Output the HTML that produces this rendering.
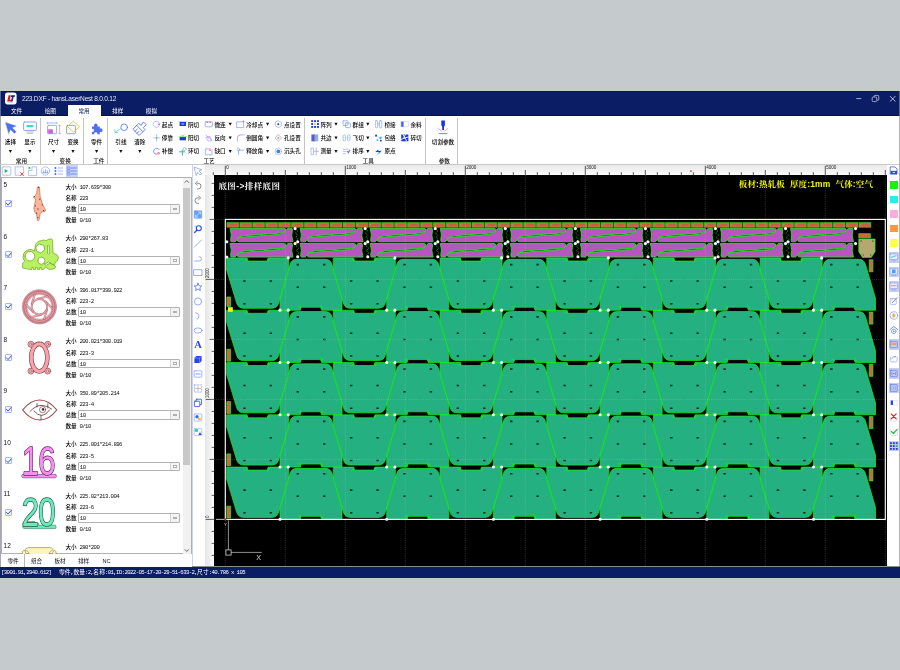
<!DOCTYPE html>
<html lang="zh-CN"><head><meta charset="utf-8"><title>223.DXF - hansLaserNest 8.0.0.12</title>
<style>
html,body{margin:0;padding:0}
body{width:900px;height:670px;overflow:hidden;position:relative;background:#c5cacc;font-family:'Liberation Sans','Noto Sans CJK SC',sans-serif;font-size:5.6px;color:#111;-webkit-font-smoothing:antialiased}
div{box-sizing:border-box}
svg{position:absolute;overflow:visible}
.t{position:absolute;white-space:nowrap}
</style></head><body><div id="root" style="position:absolute;left:0;top:0;width:900px;height:670px;will-change:transform">
<div style="position:absolute;left:0px;top:91px;width:900px;height:487.3px;background:#fff;"></div>
<div style="position:absolute;left:0px;top:91px;width:900px;height:25.3px;background:#0b1d64;"></div>
<div style="position:absolute;left:0px;top:91px;width:900px;height:1px;background:#081660;"></div>
<div style="position:absolute;left:0px;top:115px;width:900px;height:1px;background:#050f58;"></div>
<div style="position:absolute;left:0px;top:116px;width:0.8px;height:451px;background:#a4a8b4;"></div>
<div style="position:absolute;left:0px;top:91px;width:0.8px;height:25px;background:#5a6592;"></div>
<div style="position:absolute;left:899.2px;top:91px;width:0.8px;height:25px;background:#59648f;"></div>
<svg style="left:0;top:0" width="900" height="670" viewBox="0 0 900 670">
<rect x="5" y="92.6" width="11.6" height="11.8" rx="2.6" fill="#fff"/>
<path d="M8.6 95.2h2.3l-1.1 4.6h2.4l-.4 1.6h-4.6z" fill="#e8141c"/>
<path d="M11.2 95.2h3.9l-.5 1.7h-1l-1 4.5h-1.7l1.1-4.5h-1.2z" fill="#1a2a8c"/>
<path d="M7.6 102.3h5.6" stroke="#7aa0e0" stroke-width=".5"/>
<path d="M856.3 98.6h5" stroke="#cfd4e6" stroke-width=".8" fill="none"/>
<rect x="872.2" y="97" width="4.6" height="4.6" rx="1" fill="none" stroke="#b9c0da" stroke-width=".8"/>
<path d="M874 96.9v-.6q0-.9.9-.9h3q.9 0 .9.9v3q0 .9-.9.9h-.9" fill="none" stroke="#b9c0da" stroke-width=".8"/>
<path d="M890 96.1l5.4 5.4M895.4 96.1l-5.4 5.4" stroke="#dfe3f0" stroke-width=".8" fill="none"/>
</svg>
<div style="position:absolute;left:22px;top:93.98px;height:9.24px;line-height:9.24px;font-size:6.6px;color:#e6eaf8;white-space:nowrap;letter-spacing:-0.24px;">223.DXF - hansLaserNest 8.0.0.12</div>
<div style="position:absolute;left:67.8px;top:105.2px;width:33.2px;height:11.3px;background:#fff;"></div>
<div style="position:absolute;left:16.6px;transform:translateX(-50%);top:108.26px;height:7.84px;line-height:7.84px;font-size:5.6px;color:#fff;white-space:nowrap;">文件</div>
<div style="position:absolute;left:50.300000000000004px;transform:translateX(-50%);top:108.26px;height:7.84px;line-height:7.84px;font-size:5.6px;color:#fff;white-space:nowrap;">绘图</div>
<div style="position:absolute;left:84.0px;transform:translateX(-50%);top:108.26px;height:7.84px;line-height:7.84px;font-size:5.6px;color:#0b1d64;white-space:nowrap;">常用</div>
<div style="position:absolute;left:117.70000000000002px;transform:translateX(-50%);top:108.26px;height:7.84px;line-height:7.84px;font-size:5.6px;color:#fff;white-space:nowrap;">排样</div>
<div style="position:absolute;left:151.4px;transform:translateX(-50%);top:108.26px;height:7.84px;line-height:7.84px;font-size:5.6px;color:#fff;white-space:nowrap;">模拟</div>
<div style="position:absolute;left:0px;top:164px;width:900px;height:0.9px;background:#c9c9c9;"></div>
<div style="position:absolute;left:39.9px;top:117.5px;width:0.8px;height:46px;background:#c4c4c4;"></div>
<div style="position:absolute;left:83.3px;top:117.5px;width:0.8px;height:46px;background:#c4c4c4;"></div>
<div style="position:absolute;left:107.0px;top:117.5px;width:0.8px;height:46px;background:#c4c4c4;"></div>
<div style="position:absolute;left:304.20000000000005px;top:117.5px;width:0.8px;height:46px;background:#c4c4c4;"></div>
<div style="position:absolute;left:425.3px;top:117.5px;width:0.8px;height:46px;background:#c4c4c4;"></div>
<div style="position:absolute;left:456.8px;top:117.5px;width:0.8px;height:46px;background:#c4c4c4;"></div>
<div style="position:absolute;left:10.4px;transform:translateX(-50%);top:139.46px;height:7.84px;line-height:7.84px;font-size:5.6px;color:#000;white-space:nowrap;font-weight:500;">选择</div>
<div style="position:absolute;left:29.9px;transform:translateX(-50%);top:139.46px;height:7.84px;line-height:7.84px;font-size:5.6px;color:#000;white-space:nowrap;font-weight:500;">显示</div>
<div style="position:absolute;left:53.5px;transform:translateX(-50%);top:139.46px;height:7.84px;line-height:7.84px;font-size:5.6px;color:#000;white-space:nowrap;font-weight:500;">尺寸</div>
<div style="position:absolute;left:73px;transform:translateX(-50%);top:139.46px;height:7.84px;line-height:7.84px;font-size:5.6px;color:#000;white-space:nowrap;font-weight:500;">变换</div>
<div style="position:absolute;left:96.6px;transform:translateX(-50%);top:139.46px;height:7.84px;line-height:7.84px;font-size:5.6px;color:#000;white-space:nowrap;font-weight:500;">零件</div>
<div style="position:absolute;left:120.9px;transform:translateX(-50%);top:139.46px;height:7.84px;line-height:7.84px;font-size:5.6px;color:#000;white-space:nowrap;font-weight:500;">引线</div>
<div style="position:absolute;left:139.8px;transform:translateX(-50%);top:139.46px;height:7.84px;line-height:7.84px;font-size:5.6px;color:#000;white-space:nowrap;font-weight:500;">清除</div>
<div style="position:absolute;left:443px;transform:translateX(-50%);top:139.46px;height:7.84px;line-height:7.84px;font-size:5.6px;color:#000;white-space:nowrap;font-weight:500;">切割参数</div>
<div style="position:absolute;left:21.4px;transform:translateX(-50%);top:158.06px;height:7.84px;line-height:7.84px;font-size:5.6px;color:#111;white-space:nowrap;font-weight:500;">常用</div>
<div style="position:absolute;left:65.2px;transform:translateX(-50%);top:158.06px;height:7.84px;line-height:7.84px;font-size:5.6px;color:#111;white-space:nowrap;font-weight:500;">变换</div>
<div style="position:absolute;left:98.8px;transform:translateX(-50%);top:158.06px;height:7.84px;line-height:7.84px;font-size:5.6px;color:#111;white-space:nowrap;font-weight:500;">工件</div>
<div style="position:absolute;left:209px;transform:translateX(-50%);top:158.06px;height:7.84px;line-height:7.84px;font-size:5.6px;color:#111;white-space:nowrap;font-weight:500;">工艺</div>
<div style="position:absolute;left:368.2px;transform:translateX(-50%);top:158.06px;height:7.84px;line-height:7.84px;font-size:5.6px;color:#111;white-space:nowrap;font-weight:500;">工具</div>
<div style="position:absolute;left:444.3px;transform:translateX(-50%);top:158.06px;height:7.84px;line-height:7.84px;font-size:5.6px;color:#111;white-space:nowrap;font-weight:500;">参数</div>
<div style="position:absolute;left:161.8px;top:121.56px;height:7.84px;line-height:7.84px;font-size:5.6px;color:#000;white-space:nowrap;font-weight:500;">起点</div>
<div style="position:absolute;left:161.8px;top:134.76px;height:7.84px;line-height:7.84px;font-size:5.6px;color:#000;white-space:nowrap;font-weight:500;">停靠</div>
<div style="position:absolute;left:161.8px;top:148.26px;height:7.84px;line-height:7.84px;font-size:5.6px;color:#000;white-space:nowrap;font-weight:500;">补偿</div>
<div style="position:absolute;left:188.0px;top:121.56px;height:7.84px;line-height:7.84px;font-size:5.6px;color:#000;white-space:nowrap;font-weight:500;">阴切</div>
<div style="position:absolute;left:188.0px;top:134.76px;height:7.84px;line-height:7.84px;font-size:5.6px;color:#000;white-space:nowrap;font-weight:500;">阳切</div>
<div style="position:absolute;left:188.0px;top:148.26px;height:7.84px;line-height:7.84px;font-size:5.6px;color:#000;white-space:nowrap;font-weight:500;">环切</div>
<div style="position:absolute;left:214.4px;top:121.56px;height:7.84px;line-height:7.84px;font-size:5.6px;color:#000;white-space:nowrap;font-weight:500;">微连</div>
<div style="position:absolute;left:214.4px;top:134.76px;height:7.84px;line-height:7.84px;font-size:5.6px;color:#000;white-space:nowrap;font-weight:500;">反向</div>
<div style="position:absolute;left:214.4px;top:148.26px;height:7.84px;line-height:7.84px;font-size:5.6px;color:#000;white-space:nowrap;font-weight:500;">缺口</div>
<div style="position:absolute;left:246.2px;top:121.56px;height:7.84px;line-height:7.84px;font-size:5.6px;color:#000;white-space:nowrap;font-weight:500;">冷却点</div>
<div style="position:absolute;left:246.2px;top:134.76px;height:7.84px;line-height:7.84px;font-size:5.6px;color:#000;white-space:nowrap;font-weight:500;">倒圆角</div>
<div style="position:absolute;left:246.2px;top:148.26px;height:7.84px;line-height:7.84px;font-size:5.6px;color:#000;white-space:nowrap;font-weight:500;">释放角</div>
<div style="position:absolute;left:284.0px;top:121.56px;height:7.84px;line-height:7.84px;font-size:5.6px;color:#000;white-space:nowrap;font-weight:500;">点设置</div>
<div style="position:absolute;left:284.0px;top:134.76px;height:7.84px;line-height:7.84px;font-size:5.6px;color:#000;white-space:nowrap;font-weight:500;">孔设置</div>
<div style="position:absolute;left:284.0px;top:148.26px;height:7.84px;line-height:7.84px;font-size:5.6px;color:#000;white-space:nowrap;font-weight:500;">沉头孔</div>
<div style="position:absolute;left:320.4px;top:121.56px;height:7.84px;line-height:7.84px;font-size:5.6px;color:#000;white-space:nowrap;font-weight:500;">阵列</div>
<div style="position:absolute;left:320.4px;top:134.76px;height:7.84px;line-height:7.84px;font-size:5.6px;color:#000;white-space:nowrap;font-weight:500;">共边</div>
<div style="position:absolute;left:320.4px;top:148.26px;height:7.84px;line-height:7.84px;font-size:5.6px;color:#000;white-space:nowrap;font-weight:500;">测量</div>
<div style="position:absolute;left:352.6px;top:121.56px;height:7.84px;line-height:7.84px;font-size:5.6px;color:#000;white-space:nowrap;font-weight:500;">群组</div>
<div style="position:absolute;left:352.6px;top:134.76px;height:7.84px;line-height:7.84px;font-size:5.6px;color:#000;white-space:nowrap;font-weight:500;">飞切</div>
<div style="position:absolute;left:352.6px;top:148.26px;height:7.84px;line-height:7.84px;font-size:5.6px;color:#000;white-space:nowrap;font-weight:500;">排序</div>
<div style="position:absolute;left:384.4px;top:121.56px;height:7.84px;line-height:7.84px;font-size:5.6px;color:#000;white-space:nowrap;font-weight:500;">桥接</div>
<div style="position:absolute;left:384.4px;top:134.76px;height:7.84px;line-height:7.84px;font-size:5.6px;color:#000;white-space:nowrap;font-weight:500;">包络</div>
<div style="position:absolute;left:384.4px;top:148.26px;height:7.84px;line-height:7.84px;font-size:5.6px;color:#000;white-space:nowrap;font-weight:500;">原点</div>
<div style="position:absolute;left:410.5px;top:121.56px;height:7.84px;line-height:7.84px;font-size:5.6px;color:#000;white-space:nowrap;font-weight:500;">余料</div>
<div style="position:absolute;left:410.5px;top:134.76px;height:7.84px;line-height:7.84px;font-size:5.6px;color:#000;white-space:nowrap;font-weight:500;">碎切</div>
<svg style="left:0;top:0" width="900" height="670" viewBox="0 0 900 670" fill="none" stroke-linecap="round" stroke-linejoin="round">
<path d="M8.80 149.88h3.2l-1.60 3.04z" fill="#111"/>
<path d="M28.30 149.88h3.2l-1.60 3.04z" fill="#111"/>
<path d="M51.90 149.88h3.2l-1.60 3.04z" fill="#111"/>
<path d="M71.40 149.88h3.2l-1.60 3.04z" fill="#111"/>
<path d="M95.00 149.88h3.2l-1.60 3.04z" fill="#111"/>
<path d="M119.30 149.88h3.2l-1.60 3.04z" fill="#111"/>
<path d="M138.20 149.88h3.2l-1.60 3.04z" fill="#111"/>
<path d="M228.60 122.68h3.2l-1.60 3.04z" fill="#111"/>
<path d="M228.60 136.38h3.2l-1.60 3.04z" fill="#111"/>
<path d="M228.60 149.88h3.2l-1.60 3.04z" fill="#111"/>
<path d="M266.00 122.68h3.2l-1.60 3.04z" fill="#111"/>
<path d="M266.00 136.38h3.2l-1.60 3.04z" fill="#111"/>
<path d="M266.00 149.88h3.2l-1.60 3.04z" fill="#111"/>
<path d="M334.40 122.68h3.2l-1.60 3.04z" fill="#111"/>
<path d="M334.40 136.38h3.2l-1.60 3.04z" fill="#111"/>
<path d="M334.40 149.88h3.2l-1.60 3.04z" fill="#111"/>
<path d="M366.20 122.68h3.2l-1.60 3.04z" fill="#111"/>
<path d="M366.20 136.38h3.2l-1.60 3.04z" fill="#111"/>
<path d="M366.20 149.88h3.2l-1.60 3.04z" fill="#111"/>
<path d="M5.6 122.4l10.6 3.6-4 1.8 3.9 3.9-1.7 1.7-3.9-3.9-1.8 4z" fill="#4f6ff0" stroke="#4f6ff0" stroke-width=".3"/>
<rect x="23.6" y="122" width="12.8" height="8.4" rx="1" stroke="#7f98f6" stroke-width=".9"/>
<rect x="26.6" y="125" width="6.8" height="2.2" fill="#3fd6c4"/>
<path d="M26.5 132h7M27.5 133.4h5" stroke="#7f98f6" stroke-width=".6"/>
<path d="M47.4 123h9.4" stroke="#7f98f6" stroke-width=".7" stroke-dasharray="1.2 .8"/>
<path d="M47.3 122.2v1.6M56.9 122.2v1.6M59.6 125.4v8.2M58.8 125.4h1.6M58.8 133.6h1.6" stroke="#7f98f6" stroke-width=".6"/>
<rect x="47.6" y="125.4" width="9" height="8.3" rx=".8" stroke="#7f98f6" stroke-width=".8"/>
<rect x="48.4" y="129.6" width="4.2" height="3.6" fill="#f04fd8" stroke="#4f6ff0" stroke-width=".4"/>
<rect x="66.6" y="125.4" width="8.8" height="8.3" rx=".8" stroke="#7f98f6" stroke-width=".9"/>
<path d="M73.6 121.4l5.9 5.4-5.9 5.4-5.9-5.4z" stroke="#f7a13a" stroke-width=".7"/>
<path fill-rule="evenodd" d="M92 126.400h2.300a1.800 1.800 0 1 1 3 0h2.500v2.300a1.800 1.800 0 1 1 0 3v2.500h-2.600a1.500 1.500 0 1 0-2.800 0h-2.400v-2.500a1.500 1.500 0 1 0 0-2.800z" fill="#4f6ff0" stroke="none"/>
<circle cx="124.2" cy="127.3" r="3.3" stroke="#4f6ff0" stroke-width=".8"/>
<path d="M120.8 128.6l-5.6 3.6M114.8 129.8l.2 2.6 2.6.1" stroke="#3fd6c4" stroke-width=".7"/>
<g transform="rotate(45 140.4 128)" stroke="#4f6ff0" stroke-width=".8"><path d="M138.6 121.6h3.6v4.2h2.6v3h-8.8v-3h2.6z"/><path d="M136 128.8v5.4h8.8v-5.4M139 131v3.2M141.8 131v3.2"/></g>
<path d="M441.3 120.6h3.6v4.6l-.9 1.6v3.2h-1.8v-3.2l-.9-1.6z" fill="#1838e0" stroke="none"/>
<path d="M438.6 128.6l3 2.6M447.6 128.6l-3 2.6" stroke="#f04fd8" stroke-width=".6"/>
<path d="M438.8 133.6h8.6" stroke="#22b8f0" stroke-width="1.1" stroke-linecap="butt"/>
<circle cx="156.4" cy="124.2" r="3.1" stroke="#7f98f6" stroke-width=".6" stroke-dasharray="2.2 .7"/><circle cx="159" cy="124.4" r=".8" fill="#f04fd8"/>
<path d="M156.6 134.5v6.8M153.4 137.9h6.4" stroke="#7f98f6" stroke-width=".6"/><circle cx="156.6" cy="137.9" r=".8" fill="#2fd65a"/>
<path d="M159.4 149.8a3.1 3.1 0 1 0-2.4 4.6" stroke="#4f6ff0" stroke-width=".7"/><circle cx="158.6" cy="153.20000000000002" r="1.3" fill="#f58a6a"/>
<rect x="179.6" y="122.0" width="6.4" height="4" fill="#1838e0"/><path d="M179 121.60000000000001h7.6" stroke="#7f98f6" stroke-width=".5"/><rect x="181.4" y="123.0" width="2.8" height="2" fill="#6a86f5"/>
<rect x="179.6" y="137.1" width="6.4" height="3.2" fill="#1838e0"/><path d="M181.4 134.9l1.2 1.4 1.6-1.6" stroke="#f0432a" stroke-width=".5"/><path d="M179 136.5h7.6" stroke="#2fd65a" stroke-width=".5"/>
<path d="M182.4 150.20000000000002v5" stroke="#2fb8a0" stroke-width="1"/><path d="M179.4 151.8h5.4" stroke="#2fb8a0" stroke-width=".9"/><circle cx="184.6" cy="149.0" r="1.5" stroke="#7f98f6" stroke-width=".6"/>
<rect x="205.2" y="121.8" width="7.2" height="5" rx=".6" stroke="#7f98f6" stroke-width=".7"/><path d="M206.7 122.2h1.4M209.5 122.2h1.4" stroke="#f0432a" stroke-width="1.1" stroke-linecap="butt"/>
<path d="M206 135.1l5.8 5.2M207.8 140.70000000000002l-1.8-3.6 3.8-.6 1.8 3.8z" stroke="#7f98f6" stroke-width=".6"/><circle cx="208.6" cy="137.3" r="1.3" fill="#f7a0e8"/>
<path d="M208 148.8h-2.6v6h6.6v-5" stroke="#7f98f6" stroke-width=".7"/><rect x="208.6" y="148.4" width="2.4" height="2.6" fill="#f7a0e8"/>
<rect x="237" y="121.8" width="6.6" height="5.8" stroke="#7f98f6" stroke-width=".7"/><circle cx="243.6" cy="121.4" r=".8" fill="#f04fd8"/>
<path d="M237.4 141.1v-3.2q0-3 3-3h3.6" stroke="#7f98f6" stroke-width=".7"/><path d="M237.4 137.5q.2-2.4 2.8-2.6" stroke="#f5a58a" stroke-width=".6"/>
<path d="M238.6 154.8v-4.6h5.4" stroke="#7f98f6" stroke-width=".7"/><circle cx="238.4" cy="149.4" r="1.3" stroke="#7f98f6" stroke-width=".6"/>
<path d="M278.3 120.8l3 1.7v3.4l-3 1.7-3-1.7v-3.4z" stroke="#7f98f6" stroke-width=".6"/><circle cx="278.3" cy="124.2" r="1" fill="#1838e0"/>
<path d="M278.3 134.5l3.2 3.4-3.2 3.4-3.2-3.4z" stroke="#7f98f6" stroke-width=".6" stroke-dasharray="1 .5"/><circle cx="278.3" cy="137.9" r="1.1" fill="#f7946a"/>
<circle cx="278.3" cy="151.4" r="3.3" stroke="#7f98f6" stroke-width=".5"/><circle cx="278.3" cy="151.4" r="1.9" fill="#3f7ff5"/>
<rect x="311.2" y="120.2" width="1.9" height="1.9" fill="#1838e0"/>
<rect x="314.1" y="120.2" width="1.9" height="1.9" fill="#1838e0"/>
<rect x="317.0" y="120.2" width="1.9" height="1.9" fill="#1838e0"/>
<rect x="311.2" y="123.1" width="1.9" height="1.9" fill="#1838e0"/>
<rect x="314.1" y="123.1" width="1.9" height="1.9" fill="#f5d020"/>
<rect x="317.0" y="123.1" width="1.9" height="1.9" fill="#1838e0"/>
<rect x="311.2" y="126.0" width="1.9" height="1.9" fill="#1838e0"/>
<rect x="314.1" y="126.0" width="1.9" height="1.9" fill="#1838e0"/>
<rect x="317.0" y="126.0" width="1.9" height="1.9" fill="#1838e0"/>
<rect x="311.4" y="134.5" width="3.2" height="6.8" fill="#3f62ee"/><rect x="314.6" y="134.5" width="3.6" height="6.8" fill="#7fb2f5"/><path d="M314.6 134.5v6.8" stroke="#f0432a" stroke-width=".6"/>
<rect x="311.4" y="148.20000000000002" width="2.2" height="6.4" stroke="#7f98f6" stroke-width=".6"/><path d="M316.2 147.8v7.2M314 151.4h4.4" stroke="#7f98f6" stroke-width=".6"/>
<rect x="343" y="120.8" width="5" height="4.6" rx=".6" stroke="#7f98f6" stroke-width=".7"/><rect x="345.4" y="123.0" width="5" height="4.6" rx=".6" stroke="#7f98f6" stroke-width=".7"/>
<rect x="343.2" y="134.9" width="2.4" height="6" rx="1" stroke="#7f98f6" stroke-width=".6" stroke-dasharray="1.2 .6"/><rect x="347.6" y="134.9" width="2.4" height="6" rx="1" stroke="#7f98f6" stroke-width=".6" stroke-dasharray="1.2 .6"/><path d="M343 137.9h7.4" stroke="#9fd8e8" stroke-width=".5"/>
<path d="M343.2 149.20000000000002h5M343.2 151.4h3M343.2 153.6h2" stroke="#7f98f6" stroke-width=".6"/><path d="M347 150.8l3 .6-2 2.4z" fill="#4f6ff0" stroke="none"/><circle cx="349.6" cy="150.4" r=".8" fill="#f04fd8"/>
<rect x="375.4" y="120.60000000000001" width="2.2" height="7.2" rx=".6" stroke="#7f98f6" stroke-width=".6"/><rect x="379.6" y="120.60000000000001" width="2.2" height="7.2" rx=".6" stroke="#7f98f6" stroke-width=".6"/><path d="M377.6 123.4h2M377.6 125.0h2" stroke="#7f98f6" stroke-width=".5"/>
<path d="M375.4 134.9l6.4 6" stroke="#f7a0e8" stroke-width=".6" stroke-dasharray=".8 .6"/><rect x="375.2" y="134.70000000000002" width="1.8" height="1.8" fill="#1838e0"/><rect x="379.4" y="136.70000000000002" width="2.2" height="2.2" fill="#22c0f0"/><rect x="376.6" y="139.3" width="1.6" height="1.6" fill="#22c0f0"/><rect x="380" y="139.9" width="1.6" height="1.6" fill="#1838e0"/>
<path d="M375.2 152.0l3.2-2.6v1.6l3.4-.2-3 2.8v-1.6z" fill="#1838e0" stroke="none"/><path d="M377 154.6l3.4-2.4" stroke="#22c0f0" stroke-width=".7"/>
<rect x="401.2" y="121.60000000000001" width="7.2" height="5.2" stroke="#c9d3fa" stroke-width=".7"/><rect x="401.2" y="121.60000000000001" width="2.4" height="5.2" fill="#3f62ee"/>
<rect x="401.2" y="134.5" width="7.2" height="6.8" fill="#1838e0"/><path d="M403 134.5l3.8 6.8M408.4 136.9l-7.2 2.4M405.4 134.5l-1.4 3" stroke="#fff" stroke-width=".9"/>
</svg>
<div style="position:absolute;left:66.4px;top:165.4px;width:11.6px;height:11.4px;background:#c9d5f6;"></div>
<svg style="left:0;top:0" width="900" height="670" viewBox="0 0 900 670" fill="none" stroke-linecap="round" stroke-linejoin="round">
<rect x="2.2" y="166.8" width="8.6" height="8.4" rx=".8" stroke="#92a7f7" stroke-width=".7"/><path d="M4.6 169l3.6 2-3.6 2z" fill="#1fc24a"/>
<path d="M20.4 175.2h-5.2v-8.4h8.4v4.6" stroke="#92a7f7" stroke-width=".7"/><path d="M20.6 172.6l3 3M23.6 172.6l-3 3" stroke="#f02a1c" stroke-width=".9"/>
<path d="M28.6 175.2v-4.8h3.4v-3.6h4.6v8.4z" stroke="#92a7f7" stroke-width=".7"/><path d="M28.6 166.6l2.6 1.3-2.6 1.3z" fill="#1fc24a"/>
<circle cx="45.4" cy="171" r="4.2" stroke="#92a7f7" stroke-width=".7"/><path d="M43.4 172.4v-1.4M45.4 172.4v-2.6M47.4 172.4v-1.4M43 172.8h4.8" stroke="#4f6ff0" stroke-width=".6"/>
<rect x="54.6" y="167.2" width="1.6" height="1.6" fill="#2a4cf0"/><path d="M58 168h4.6" stroke="#92a7f7" stroke-width=".8"/>
<rect x="67.6" y="166.9" width="2.4" height="2.2" stroke="#4f6ff0" stroke-width=".5"/><path d="M71.4 168h5" stroke="#4f6ff0" stroke-width=".7"/>
<rect x="54.6" y="170.2" width="1.6" height="1.6" fill="#2a4cf0"/><path d="M58 171h4.6" stroke="#92a7f7" stroke-width=".8"/>
<rect x="67.6" y="169.9" width="2.4" height="2.2" stroke="#4f6ff0" stroke-width=".5"/><path d="M71.4 171h5" stroke="#4f6ff0" stroke-width=".7"/>
<rect x="54.6" y="173.2" width="1.6" height="1.6" fill="#2a4cf0"/><path d="M58 174h4.6" stroke="#92a7f7" stroke-width=".8"/>
<rect x="67.6" y="172.9" width="2.4" height="2.2" stroke="#4f6ff0" stroke-width=".5"/><path d="M71.4 174h5" stroke="#4f6ff0" stroke-width=".7"/>
</svg>
<div style="position:absolute;left:1px;top:177px;width:190.8px;height:377.4px;background:#fff;border:0.8px solid #b0b0b0;"></div>
<div style="position:absolute;left:182.6px;top:177.8px;width:8.4px;height:375.8px;background:#f1f1f1;"></div>
<div style="position:absolute;left:183.2px;top:187.6px;width:7.2px;height:277.6px;background:#c8c8c8;"></div>
<svg style="left:0;top:0" width="900" height="670" viewBox="0 0 900 670" fill="none"><path d="M184.8 182.6l2-2 2 2M184.8 549.4l2 2 2-2" stroke="#444" stroke-width=".8"/></svg>
<div style="position:absolute;left:1.8px;top:177.8px;width:180.8px;height:375.8px;overflow:hidden">
<div style="position:absolute;left:-1.8px;top:-177.8px;width:900px;height:670px">
<div style="position:absolute;left:3.6px;top:180.45px;height:9.1px;line-height:9.1px;font-size:6.5px;color:#111;white-space:nowrap;">5</div>
<div style="position:absolute;left:65.4px;top:183.86px;height:7.84px;line-height:7.84px;font-size:5.6px;color:#000;white-space:nowrap;font-weight:500;">大小</div>
<div style="position:absolute;left:79.4px;top:183.91px;height:7.98px;line-height:7.98px;font-size:5.7px;color:#111;white-space:nowrap;font-family:'Liberation Mono','Noto Sans CJK SC',monospace;letter-spacing:-0.58px;">107.639*300</div>
<div style="position:absolute;left:65.4px;top:195.26px;height:7.84px;line-height:7.84px;font-size:5.6px;color:#000;white-space:nowrap;font-weight:500;">名称</div>
<div style="position:absolute;left:79.4px;top:195.31px;height:7.98px;line-height:7.98px;font-size:5.7px;color:#111;white-space:nowrap;font-family:'Liberation Mono','Noto Sans CJK SC',monospace;letter-spacing:-0.58px;">223</div>
<div style="position:absolute;left:65.4px;top:206.36px;height:7.84px;line-height:7.84px;font-size:5.6px;color:#000;white-space:nowrap;font-weight:500;">总数</div>
<div style="position:absolute;left:78.4px;top:204.4px;width:101.8px;height:9.4px;background:#fff;border:0.7px solid #b2b2b2;border-radius:1px;"></div>
<div style="position:absolute;left:170.4px;top:205.2px;width:9px;height:7.8px;background:#f3f3f3;border-left:0.6px solid #d4d4d4;"></div>
<div style="position:absolute;left:173.4px;top:207.6px;width:3.4px;height:2.8px;background:#fff;border:0.6px solid #b0b0b0;"></div>
<div style="position:absolute;left:79.8px;top:206.31px;height:7.98px;line-height:7.98px;font-size:5.7px;color:#111;white-space:nowrap;font-family:'Liberation Mono','Noto Sans CJK SC',monospace;letter-spacing:-0.58px;">10</div>
<div style="position:absolute;left:65.4px;top:217.36px;height:7.84px;line-height:7.84px;font-size:5.6px;color:#000;white-space:nowrap;font-weight:500;">数量</div>
<div style="position:absolute;left:79.4px;top:217.41px;height:7.98px;line-height:7.98px;font-size:5.7px;color:#111;white-space:nowrap;font-family:'Liberation Mono','Noto Sans CJK SC',monospace;letter-spacing:-0.58px;">0/10</div>
<div style="position:absolute;left:5px;top:199.6px;width:7.4px;height:7.4px;background:#f4f7ff;border:0.8px solid #a6b6f7;border-radius:1px;"></div>
<div style="position:absolute;left:3.6px;top:231.95px;height:9.1px;line-height:9.1px;font-size:6.5px;color:#111;white-space:nowrap;">6</div>
<div style="position:absolute;left:65.4px;top:235.36px;height:7.84px;line-height:7.84px;font-size:5.6px;color:#000;white-space:nowrap;font-weight:500;">大小</div>
<div style="position:absolute;left:79.4px;top:235.41px;height:7.98px;line-height:7.98px;font-size:5.7px;color:#111;white-space:nowrap;font-family:'Liberation Mono','Noto Sans CJK SC',monospace;letter-spacing:-0.58px;">290*267.83</div>
<div style="position:absolute;left:65.4px;top:246.76px;height:7.84px;line-height:7.84px;font-size:5.6px;color:#000;white-space:nowrap;font-weight:500;">名称</div>
<div style="position:absolute;left:79.4px;top:246.81px;height:7.98px;line-height:7.98px;font-size:5.7px;color:#111;white-space:nowrap;font-family:'Liberation Mono','Noto Sans CJK SC',monospace;letter-spacing:-0.58px;">223-1</div>
<div style="position:absolute;left:65.4px;top:257.86px;height:7.84px;line-height:7.84px;font-size:5.6px;color:#000;white-space:nowrap;font-weight:500;">总数</div>
<div style="position:absolute;left:78.4px;top:255.9px;width:101.8px;height:9.4px;background:#fff;border:0.7px solid #b2b2b2;border-radius:1px;"></div>
<div style="position:absolute;left:170.4px;top:256.7px;width:9px;height:7.8px;background:#f3f3f3;border-left:0.6px solid #d4d4d4;"></div>
<div style="position:absolute;left:173.4px;top:259.1px;width:3.4px;height:2.8px;background:#fff;border:0.6px solid #b0b0b0;"></div>
<div style="position:absolute;left:79.8px;top:257.81px;height:7.98px;line-height:7.98px;font-size:5.7px;color:#111;white-space:nowrap;font-family:'Liberation Mono','Noto Sans CJK SC',monospace;letter-spacing:-0.58px;">10</div>
<div style="position:absolute;left:65.4px;top:268.86px;height:7.84px;line-height:7.84px;font-size:5.6px;color:#000;white-space:nowrap;font-weight:500;">数量</div>
<div style="position:absolute;left:79.4px;top:268.91px;height:7.98px;line-height:7.98px;font-size:5.7px;color:#111;white-space:nowrap;font-family:'Liberation Mono','Noto Sans CJK SC',monospace;letter-spacing:-0.58px;">0/10</div>
<div style="position:absolute;left:5px;top:251.1px;width:7.4px;height:7.4px;background:#f4f7ff;border:0.8px solid #a6b6f7;border-radius:1px;"></div>
<div style="position:absolute;left:3.6px;top:283.45px;height:9.1px;line-height:9.1px;font-size:6.5px;color:#111;white-space:nowrap;">7</div>
<div style="position:absolute;left:65.4px;top:286.86px;height:7.84px;line-height:7.84px;font-size:5.6px;color:#000;white-space:nowrap;font-weight:500;">大小</div>
<div style="position:absolute;left:79.4px;top:286.91px;height:7.98px;line-height:7.98px;font-size:5.7px;color:#111;white-space:nowrap;font-family:'Liberation Mono','Noto Sans CJK SC',monospace;letter-spacing:-0.58px;">396.017*399.922</div>
<div style="position:absolute;left:65.4px;top:298.26px;height:7.84px;line-height:7.84px;font-size:5.6px;color:#000;white-space:nowrap;font-weight:500;">名称</div>
<div style="position:absolute;left:79.4px;top:298.31px;height:7.98px;line-height:7.98px;font-size:5.7px;color:#111;white-space:nowrap;font-family:'Liberation Mono','Noto Sans CJK SC',monospace;letter-spacing:-0.58px;">223-2</div>
<div style="position:absolute;left:65.4px;top:309.36px;height:7.84px;line-height:7.84px;font-size:5.6px;color:#000;white-space:nowrap;font-weight:500;">总数</div>
<div style="position:absolute;left:78.4px;top:307.4px;width:101.8px;height:9.4px;background:#fff;border:0.7px solid #b2b2b2;border-radius:1px;"></div>
<div style="position:absolute;left:170.4px;top:308.2px;width:9px;height:7.8px;background:#f3f3f3;border-left:0.6px solid #d4d4d4;"></div>
<div style="position:absolute;left:173.4px;top:310.6px;width:3.4px;height:2.8px;background:#fff;border:0.6px solid #b0b0b0;"></div>
<div style="position:absolute;left:79.8px;top:309.31px;height:7.98px;line-height:7.98px;font-size:5.7px;color:#111;white-space:nowrap;font-family:'Liberation Mono','Noto Sans CJK SC',monospace;letter-spacing:-0.58px;">10</div>
<div style="position:absolute;left:65.4px;top:320.36px;height:7.84px;line-height:7.84px;font-size:5.6px;color:#000;white-space:nowrap;font-weight:500;">数量</div>
<div style="position:absolute;left:79.4px;top:320.41px;height:7.98px;line-height:7.98px;font-size:5.7px;color:#111;white-space:nowrap;font-family:'Liberation Mono','Noto Sans CJK SC',monospace;letter-spacing:-0.58px;">0/10</div>
<div style="position:absolute;left:5px;top:302.6px;width:7.4px;height:7.4px;background:#f4f7ff;border:0.8px solid #a6b6f7;border-radius:1px;"></div>
<div style="position:absolute;left:3.6px;top:334.95px;height:9.1px;line-height:9.1px;font-size:6.5px;color:#111;white-space:nowrap;">8</div>
<div style="position:absolute;left:65.4px;top:338.36px;height:7.84px;line-height:7.84px;font-size:5.6px;color:#000;white-space:nowrap;font-weight:500;">大小</div>
<div style="position:absolute;left:79.4px;top:338.41px;height:7.98px;line-height:7.98px;font-size:5.7px;color:#111;white-space:nowrap;font-family:'Liberation Mono','Noto Sans CJK SC',monospace;letter-spacing:-0.58px;">200.021*300.019</div>
<div style="position:absolute;left:65.4px;top:349.76px;height:7.84px;line-height:7.84px;font-size:5.6px;color:#000;white-space:nowrap;font-weight:500;">名称</div>
<div style="position:absolute;left:79.4px;top:349.81px;height:7.98px;line-height:7.98px;font-size:5.7px;color:#111;white-space:nowrap;font-family:'Liberation Mono','Noto Sans CJK SC',monospace;letter-spacing:-0.58px;">223-3</div>
<div style="position:absolute;left:65.4px;top:360.86px;height:7.84px;line-height:7.84px;font-size:5.6px;color:#000;white-space:nowrap;font-weight:500;">总数</div>
<div style="position:absolute;left:78.4px;top:358.9px;width:101.8px;height:9.4px;background:#fff;border:0.7px solid #b2b2b2;border-radius:1px;"></div>
<div style="position:absolute;left:170.4px;top:359.7px;width:9px;height:7.8px;background:#f3f3f3;border-left:0.6px solid #d4d4d4;"></div>
<div style="position:absolute;left:173.4px;top:362.1px;width:3.4px;height:2.8px;background:#fff;border:0.6px solid #b0b0b0;"></div>
<div style="position:absolute;left:79.8px;top:360.81px;height:7.98px;line-height:7.98px;font-size:5.7px;color:#111;white-space:nowrap;font-family:'Liberation Mono','Noto Sans CJK SC',monospace;letter-spacing:-0.58px;">10</div>
<div style="position:absolute;left:65.4px;top:371.86px;height:7.84px;line-height:7.84px;font-size:5.6px;color:#000;white-space:nowrap;font-weight:500;">数量</div>
<div style="position:absolute;left:79.4px;top:371.91px;height:7.98px;line-height:7.98px;font-size:5.7px;color:#111;white-space:nowrap;font-family:'Liberation Mono','Noto Sans CJK SC',monospace;letter-spacing:-0.58px;">0/10</div>
<div style="position:absolute;left:5px;top:354.1px;width:7.4px;height:7.4px;background:#f4f7ff;border:0.8px solid #a6b6f7;border-radius:1px;"></div>
<div style="position:absolute;left:3.6px;top:386.45px;height:9.1px;line-height:9.1px;font-size:6.5px;color:#111;white-space:nowrap;">9</div>
<div style="position:absolute;left:65.4px;top:389.86px;height:7.84px;line-height:7.84px;font-size:5.6px;color:#000;white-space:nowrap;font-weight:500;">大小</div>
<div style="position:absolute;left:79.4px;top:389.91px;height:7.98px;line-height:7.98px;font-size:5.7px;color:#111;white-space:nowrap;font-family:'Liberation Mono','Noto Sans CJK SC',monospace;letter-spacing:-0.58px;">350.89*205.214</div>
<div style="position:absolute;left:65.4px;top:401.26px;height:7.84px;line-height:7.84px;font-size:5.6px;color:#000;white-space:nowrap;font-weight:500;">名称</div>
<div style="position:absolute;left:79.4px;top:401.31px;height:7.98px;line-height:7.98px;font-size:5.7px;color:#111;white-space:nowrap;font-family:'Liberation Mono','Noto Sans CJK SC',monospace;letter-spacing:-0.58px;">223-4</div>
<div style="position:absolute;left:65.4px;top:412.36px;height:7.84px;line-height:7.84px;font-size:5.6px;color:#000;white-space:nowrap;font-weight:500;">总数</div>
<div style="position:absolute;left:78.4px;top:410.4px;width:101.8px;height:9.4px;background:#fff;border:0.7px solid #b2b2b2;border-radius:1px;"></div>
<div style="position:absolute;left:170.4px;top:411.2px;width:9px;height:7.8px;background:#f3f3f3;border-left:0.6px solid #d4d4d4;"></div>
<div style="position:absolute;left:173.4px;top:413.6px;width:3.4px;height:2.8px;background:#fff;border:0.6px solid #b0b0b0;"></div>
<div style="position:absolute;left:79.8px;top:412.31px;height:7.98px;line-height:7.98px;font-size:5.7px;color:#111;white-space:nowrap;font-family:'Liberation Mono','Noto Sans CJK SC',monospace;letter-spacing:-0.58px;">10</div>
<div style="position:absolute;left:65.4px;top:423.36px;height:7.84px;line-height:7.84px;font-size:5.6px;color:#000;white-space:nowrap;font-weight:500;">数量</div>
<div style="position:absolute;left:79.4px;top:423.41px;height:7.98px;line-height:7.98px;font-size:5.7px;color:#111;white-space:nowrap;font-family:'Liberation Mono','Noto Sans CJK SC',monospace;letter-spacing:-0.58px;">0/10</div>
<div style="position:absolute;left:5px;top:405.6px;width:7.4px;height:7.4px;background:#f4f7ff;border:0.8px solid #a6b6f7;border-radius:1px;"></div>
<div style="position:absolute;left:3.6px;top:437.95px;height:9.1px;line-height:9.1px;font-size:6.5px;color:#111;white-space:nowrap;">10</div>
<div style="position:absolute;left:65.4px;top:441.36px;height:7.84px;line-height:7.84px;font-size:5.6px;color:#000;white-space:nowrap;font-weight:500;">大小</div>
<div style="position:absolute;left:79.4px;top:441.41px;height:7.98px;line-height:7.98px;font-size:5.7px;color:#111;white-space:nowrap;font-family:'Liberation Mono','Noto Sans CJK SC',monospace;letter-spacing:-0.58px;">225.001*214.896</div>
<div style="position:absolute;left:65.4px;top:452.76px;height:7.84px;line-height:7.84px;font-size:5.6px;color:#000;white-space:nowrap;font-weight:500;">名称</div>
<div style="position:absolute;left:79.4px;top:452.81px;height:7.98px;line-height:7.98px;font-size:5.7px;color:#111;white-space:nowrap;font-family:'Liberation Mono','Noto Sans CJK SC',monospace;letter-spacing:-0.58px;">223-5</div>
<div style="position:absolute;left:65.4px;top:463.86px;height:7.84px;line-height:7.84px;font-size:5.6px;color:#000;white-space:nowrap;font-weight:500;">总数</div>
<div style="position:absolute;left:78.4px;top:461.9px;width:101.8px;height:9.4px;background:#fff;border:0.7px solid #b2b2b2;border-radius:1px;"></div>
<div style="position:absolute;left:170.4px;top:462.7px;width:9px;height:7.8px;background:#f3f3f3;border-left:0.6px solid #d4d4d4;"></div>
<div style="position:absolute;left:173.4px;top:465.1px;width:3.4px;height:2.8px;background:#fff;border:0.6px solid #b0b0b0;"></div>
<div style="position:absolute;left:79.8px;top:463.81px;height:7.98px;line-height:7.98px;font-size:5.7px;color:#111;white-space:nowrap;font-family:'Liberation Mono','Noto Sans CJK SC',monospace;letter-spacing:-0.58px;">10</div>
<div style="position:absolute;left:65.4px;top:474.86px;height:7.84px;line-height:7.84px;font-size:5.6px;color:#000;white-space:nowrap;font-weight:500;">数量</div>
<div style="position:absolute;left:79.4px;top:474.91px;height:7.98px;line-height:7.98px;font-size:5.7px;color:#111;white-space:nowrap;font-family:'Liberation Mono','Noto Sans CJK SC',monospace;letter-spacing:-0.58px;">0/10</div>
<div style="position:absolute;left:5px;top:457.1px;width:7.4px;height:7.4px;background:#f4f7ff;border:0.8px solid #a6b6f7;border-radius:1px;"></div>
<div style="position:absolute;left:3.6px;top:489.45px;height:9.1px;line-height:9.1px;font-size:6.5px;color:#111;white-space:nowrap;">11</div>
<div style="position:absolute;left:65.4px;top:492.86px;height:7.84px;line-height:7.84px;font-size:5.6px;color:#000;white-space:nowrap;font-weight:500;">大小</div>
<div style="position:absolute;left:79.4px;top:492.91px;height:7.98px;line-height:7.98px;font-size:5.7px;color:#111;white-space:nowrap;font-family:'Liberation Mono','Noto Sans CJK SC',monospace;letter-spacing:-0.58px;">225.02*213.004</div>
<div style="position:absolute;left:65.4px;top:504.26px;height:7.84px;line-height:7.84px;font-size:5.6px;color:#000;white-space:nowrap;font-weight:500;">名称</div>
<div style="position:absolute;left:79.4px;top:504.31px;height:7.98px;line-height:7.98px;font-size:5.7px;color:#111;white-space:nowrap;font-family:'Liberation Mono','Noto Sans CJK SC',monospace;letter-spacing:-0.58px;">223-6</div>
<div style="position:absolute;left:65.4px;top:515.36px;height:7.84px;line-height:7.84px;font-size:5.6px;color:#000;white-space:nowrap;font-weight:500;">总数</div>
<div style="position:absolute;left:78.4px;top:513.4px;width:101.8px;height:9.4px;background:#fff;border:0.7px solid #b2b2b2;border-radius:1px;"></div>
<div style="position:absolute;left:170.4px;top:514.2px;width:9px;height:7.8px;background:#f3f3f3;border-left:0.6px solid #d4d4d4;"></div>
<div style="position:absolute;left:173.4px;top:516.6px;width:3.4px;height:2.8px;background:#fff;border:0.6px solid #b0b0b0;"></div>
<div style="position:absolute;left:79.8px;top:515.31px;height:7.98px;line-height:7.98px;font-size:5.7px;color:#111;white-space:nowrap;font-family:'Liberation Mono','Noto Sans CJK SC',monospace;letter-spacing:-0.58px;">10</div>
<div style="position:absolute;left:65.4px;top:526.36px;height:7.84px;line-height:7.84px;font-size:5.6px;color:#000;white-space:nowrap;font-weight:500;">数量</div>
<div style="position:absolute;left:79.4px;top:526.41px;height:7.98px;line-height:7.98px;font-size:5.7px;color:#111;white-space:nowrap;font-family:'Liberation Mono','Noto Sans CJK SC',monospace;letter-spacing:-0.58px;">0/10</div>
<div style="position:absolute;left:5px;top:508.6px;width:7.4px;height:7.4px;background:#f4f7ff;border:0.8px solid #a6b6f7;border-radius:1px;"></div>
<div style="position:absolute;left:3.6px;top:540.95px;height:9.1px;line-height:9.1px;font-size:6.5px;color:#111;white-space:nowrap;">12</div>
<div style="position:absolute;left:65.4px;top:544.36px;height:7.84px;line-height:7.84px;font-size:5.6px;color:#000;white-space:nowrap;font-weight:500;">大小</div>
<div style="position:absolute;left:79.4px;top:544.41px;height:7.98px;line-height:7.98px;font-size:5.7px;color:#111;white-space:nowrap;font-family:'Liberation Mono','Noto Sans CJK SC',monospace;letter-spacing:-0.58px;">280*200</div>
<svg style="left:0;top:0" width="900" height="670" viewBox="0 0 900 670" fill="none" stroke-linejoin="round" stroke-linecap="round">
<path d="M6.4 203.4l1.7 1.7 3-3.6" stroke="#1f3fe0" stroke-width=".9"/>
<path d="M6.4 254.9l1.7 1.7 3-3.6" stroke="#1f3fe0" stroke-width=".9"/>
<path d="M6.4 306.4l1.7 1.7 3-3.6" stroke="#1f3fe0" stroke-width=".9"/>
<path d="M6.4 357.9l1.7 1.7 3-3.6" stroke="#1f3fe0" stroke-width=".9"/>
<path d="M6.4 409.4l1.7 1.7 3-3.6" stroke="#1f3fe0" stroke-width=".9"/>
<path d="M6.4 460.9l1.7 1.7 3-3.6" stroke="#1f3fe0" stroke-width=".9"/>
<path d="M6.4 512.4l1.7 1.7 3-3.6" stroke="#1f3fe0" stroke-width=".9"/>
<path d="M37.6 186.9q.9-.7 1.800 0l.8 9.900 2.600 8 2.800 5.200-.4 1.200-2.400.6-2.600 1.800-1 6-.8 1.200-.9-.4-.9-6-2.100-2.800-.6-3.900 1.800-8.700-2.200-1.300 2.300-2.800 .900-2.200z" fill="#f8b79d" stroke="#c8704e" stroke-width=".7"/>
<circle cx="38.5" cy="187.6" r=".6" fill="#5a2a1a"/>
<circle cx="34.2" cy="196.6" r=".6" fill="#5a2a1a"/>
<circle cx="39.8" cy="199.2" r=".6" fill="#5a2a1a"/>
<circle cx="42.2" cy="204.8" r=".6" fill="#5a2a1a"/>
<circle cx="35.4" cy="205.8" r=".6" fill="#5a2a1a"/>
<circle cx="38" cy="208.9" r=".6" fill="#5a2a1a"/>
<circle cx="43.6" cy="210.6" r=".6" fill="#5a2a1a"/>
<circle cx="36.6" cy="213.2" r=".6" fill="#5a2a1a"/>
<circle cx="37.8" cy="217.6" r=".6" fill="#5a2a1a"/>
<path fill-rule="evenodd" d="M22.6 267.600v-4.600l2-1.800q-2.600-3.400-1-7.400q2.600-4.600 7.800-4.200l3.200 1.400 1-6.800 2.600-2.800 6-1.400 2 .8 1.600-1.200 3.600-.8 1.200 1.400.4 13 3.800 1.400 1.800 3-1.200 3.200-2 1.200-.8 2.800-2.400-.4-3.800-2.600-2 1.400-2.400 .8 2.400 1.400 3.600-2.600 5.600 3.400-.8 2.400-5.600 1-3.400-2.400-2.400 2.200h-2.200v-2h-1.600v2h-2.400v-2h-1.600v2h-2.400v-2h-1.400v2z M25.100 256.200a4.800 4.800 0 1 0 9.600 0a4.800 4.800 0 1 0-9.600 0z M44.4 250.0L40.9 252.9L36.6 251.4L35.8 246.8L39.3 243.9L43.6 245.4z M37.700 260.700a3.600 3.600 0 1 0 7.200 0a3.600 3.600 0 1 0-7.200 0z M47.600 245.600v8q.9 1 1.700 0v-8q-.8-1-1.700 0z" fill="#b9f163" stroke="#72ad2c" stroke-width=".8"/>
<circle cx="39.4" cy="306.8" r="14.8" stroke="#eda3aa" stroke-width="4.600"/>
<circle cx="39.4" cy="306.8" r="15.6" stroke="#7a3444" stroke-opacity=".42" stroke-width="1.500" stroke-dasharray=".7 1.200"/>
<circle cx="39.4" cy="306.8" r="13.6" stroke="#7a3444" stroke-opacity=".38" stroke-width="1.300" stroke-dasharray=".6 1.500"/>
<circle cx="39.4" cy="306.8" r="17.100" stroke="#7a3444" stroke-opacity=".7" stroke-width=".5" stroke-dasharray="1.700 .800"/>
<circle cx="39.4" cy="306.8" r="12.400" stroke="#7a3444" stroke-opacity=".6" stroke-width=".45"/>
<path d="M38.0 298.7L47.3 296.6" stroke="#7a3444" stroke-opacity=".55" stroke-width="2.100"/>
<path d="M38.0 298.7L47.3 296.6" stroke="#eda3aa" stroke-width="1.300"/>
<path d="M45.7 301.5L52.2 308.6" stroke="#7a3444" stroke-opacity=".55" stroke-width="2.100"/>
<path d="M45.7 301.5L52.2 308.6" stroke="#eda3aa" stroke-width="1.300"/>
<path d="M47.1 309.6L44.2 318.8" stroke="#7a3444" stroke-opacity=".55" stroke-width="2.100"/>
<path d="M47.1 309.6L44.2 318.8" stroke="#eda3aa" stroke-width="1.300"/>
<path d="M40.8 314.9L31.5 317.0" stroke="#7a3444" stroke-opacity=".55" stroke-width="2.100"/>
<path d="M40.8 314.9L31.5 317.0" stroke="#eda3aa" stroke-width="1.300"/>
<path d="M33.1 312.1L26.6 305.0" stroke="#7a3444" stroke-opacity=".55" stroke-width="2.100"/>
<path d="M33.1 312.1L26.6 305.0" stroke="#eda3aa" stroke-width="1.300"/>
<path d="M31.7 304.0L34.6 294.8" stroke="#7a3444" stroke-opacity=".55" stroke-width="2.100"/>
<path d="M31.7 304.0L34.6 294.8" stroke="#eda3aa" stroke-width="1.300"/>
<circle cx="39.4" cy="306.8" r="7.800" stroke="#7a3444" stroke-opacity=".6" stroke-width="2"/>
<circle cx="39.4" cy="306.8" r="7.900" stroke="#eda3aa" stroke-width="1.100"/>
<circle cx="30.9" cy="344.3" r="3" fill="#f6a3ab" stroke="#7a3c44" stroke-width=".6"/>
<circle cx="47.699999999999996" cy="344.3" r="3" fill="#f6a3ab" stroke="#7a3c44" stroke-width=".6"/>
<circle cx="30.9" cy="371.09999999999997" r="3" fill="#f6a3ab" stroke="#7a3c44" stroke-width=".6"/>
<circle cx="47.699999999999996" cy="371.09999999999997" r="3" fill="#f6a3ab" stroke="#7a3c44" stroke-width=".6"/>
<ellipse cx="39.3" cy="357.7" rx="8.1" ry="13.8" stroke="#7a3c44" stroke-width="4.6"/>
<ellipse cx="39.3" cy="357.7" rx="8.1" ry="13.8" stroke="#f6a3ab" stroke-width="3.4"/>
<circle cx="30.9" cy="344.3" r="2.4" fill="#f6a3ab"/>
<circle cx="30.9" cy="344.3" r="1.1" fill="#fff" stroke="#7a3c44" stroke-width=".5"/>
<circle cx="47.699999999999996" cy="344.3" r="2.4" fill="#f6a3ab"/>
<circle cx="47.699999999999996" cy="344.3" r="1.1" fill="#fff" stroke="#7a3c44" stroke-width=".5"/>
<circle cx="30.9" cy="371.09999999999997" r="2.4" fill="#f6a3ab"/>
<circle cx="30.9" cy="371.09999999999997" r="1.1" fill="#fff" stroke="#7a3c44" stroke-width=".5"/>
<circle cx="47.699999999999996" cy="371.09999999999997" r="2.4" fill="#f6a3ab"/>
<circle cx="47.699999999999996" cy="371.09999999999997" r="1.1" fill="#fff" stroke="#7a3c44" stroke-width=".5"/>
<path d="M22.6 410q8-10 17-10q9.4 0 17.2 10q-7.8 10-17.2 10q-9 0-17-10z" stroke="#9a4a4a" stroke-width="1.15"/>
<path d="M30 411.4q6-6.4 12-6t9.6 3.6M34 411q3.6 4.6 8 4.4t7.4-5.4M37 403.4v3.6M41 415.6v4.2M47.8 404v4" stroke="#5a2c2c" stroke-width=".75"/>
<circle cx="42.6" cy="409.6" r="3.1" stroke="#5a2c2c" stroke-width=".6"/><circle cx="43" cy="409.4" r="1.3" fill="#5a2c2c"/>
<path d="M22.4 474.4h33.6l.4 2.6-.8.8h-32.6l-1-.8z" fill="#f78ff2" stroke="#6a3a68" stroke-width=".6"/>
<path d="M24.2 521.8l10.4-.2.8 2h3.2v1.6h16.8l.8 1.6-.8 1.8h-31.6l-1-1.2v-4.2z" fill="#6aebbd" stroke="#2f7a60" stroke-width=".6"/>
<path d="M22.4 556v-4.6q1.4-2 3-.2l.4 2.4h26.8l.4-2.4q1.6-1.8 3 .2v4.6z" fill="#fdf6b8" stroke="#6a6430" stroke-width=".5"/>
<path d="M25 549.6q1.600-2 3.600-2h21q2 0 3.600 2l-3 2.200q-1.600 3-3 4.200h-16.200q-1.400-1.200-3-4.200z" fill="#fdf6b8" stroke="#6a6430" stroke-width=".5"/>
<text transform="translate(21.8 474.6) scale(.76 1)" font-family="Liberation Sans, sans-serif" font-size="41" letter-spacing="-1" fill="#f78ff2" stroke="#5a2a58" stroke-width="1.5" paint-order="stroke">16</text>
<text transform="translate(21.8 526.2) scale(.76 1)" font-family="Liberation Sans, sans-serif" font-size="41" letter-spacing="-1" fill="#6aebbd" stroke="#1f5a44" stroke-width="1.5" paint-order="stroke">20</text>
</svg>
</div></div>
<div style="position:absolute;left:0.8px;top:553.6px;width:24px;height:1.2px;background:#fff;"></div>
<div style="position:absolute;left:24.2px;top:554.4px;width:0.7px;height:12.2px;background:#b5b5b5;"></div>
<div style="position:absolute;left:13px;transform:translateX(-50%);top:557.86px;height:7.84px;line-height:7.84px;font-size:5.6px;color:#111;white-space:nowrap;">零件</div>
<div style="position:absolute;left:36.5px;transform:translateX(-50%);top:557.86px;height:7.84px;line-height:7.84px;font-size:5.6px;color:#111;white-space:nowrap;">组合</div>
<div style="position:absolute;left:60px;transform:translateX(-50%);top:557.86px;height:7.84px;line-height:7.84px;font-size:5.6px;color:#111;white-space:nowrap;">板材</div>
<div style="position:absolute;left:83.6px;transform:translateX(-50%);top:557.86px;height:7.84px;line-height:7.84px;font-size:5.6px;color:#111;white-space:nowrap;">排样</div>
<div style="position:absolute;left:106.6px;transform:translateX(-50%);top:557.88px;height:7.84px;line-height:7.84px;font-size:5.6px;color:#111;white-space:nowrap;">NC</div>
<div style="position:absolute;left:192px;top:165px;width:13px;height:401px;background:#fff;border-left:0.7px solid #ccd3ee;"></div>
<div style="position:absolute;left:887.4px;top:165px;width:12.6px;height:401px;background:#fff;"></div>
<div style="position:absolute;left:899.2px;top:116px;width:0.8px;height:451px;background:#b5b5b5;"></div>
<div style="position:absolute;left:888.8px;top:252.3px;width:10px;height:10.4px;background:#c6cff3;"></div>
<div style="position:absolute;left:888.8px;top:266.8px;width:10px;height:10.4px;background:#c6cff3;"></div>
<div style="position:absolute;left:888.8px;top:281.3px;width:10px;height:10.4px;background:#c6cff3;"></div>
<div style="position:absolute;left:888.8px;top:339.3px;width:10px;height:10.4px;background:#c6cff3;"></div>
<div style="position:absolute;left:888.8px;top:368.3px;width:10px;height:10.4px;background:#c6cff3;"></div>
<div style="position:absolute;left:888.8px;top:382.8px;width:10px;height:10.4px;background:#c6cff3;"></div>
<div style="position:absolute;left:888.8px;top:440.8px;width:10px;height:10.4px;background:#c6cff3;"></div>
<div style="position:absolute;left:889.8px;top:181.0px;width:7.8px;height:7.8px;background:#16f016;"></div>
<div style="position:absolute;left:889.8px;top:195.5px;width:7.8px;height:7.8px;background:#2fe9f1;"></div>
<div style="position:absolute;left:889.8px;top:210.0px;width:7.8px;height:7.8px;background:#ffaddd;"></div>
<div style="position:absolute;left:889.8px;top:224.5px;width:7.8px;height:7.8px;background:#ff9742;"></div>
<div style="position:absolute;left:889.8px;top:239.0px;width:7.8px;height:7.8px;background:#ffff44;"></div>
<div style="position:absolute;left:198px;transform:translateX(-50%);top:337.65px;height:14.7px;line-height:14.7px;font-size:10.5px;color:#2446e6;white-space:nowrap;font-family:'Liberation Serif',serif;font-weight:bold;">A</div>
<svg style="left:0;top:0" width="900" height="670" viewBox="0 0 900 670" fill="none" stroke-linecap="round" stroke-linejoin="round">
<path d="M194.4 167.2l7.4 2.6-2.8 1.2 2.6 2.6-1.4 1.4-2.6-2.6-1.2 2.8z" stroke="#7f98f6" stroke-width=".7"/>
<path d="M197 183.3h1.2a2.8 2.8 0 0 1 0 5.6h-.8" stroke="#8a8a8a" stroke-width="1"/><path d="M197.4 181.5l-2.2 1.8 2.2 1.8" stroke="#8a8a8a" stroke-width=".9"/>
<path d="M199 197.8h-1.2a2.8 2.8 0 0 0 0 5.6h.8" stroke="#8a8a8a" stroke-width="1"/><path d="M198.6 196.0l2.2 1.8-2.2 1.8" stroke="#8a8a8a" stroke-width=".9"/>
<rect x="194.2" y="210.7" width="7.6" height="7.6" rx=".8" fill="#5fa2f7" stroke="#7f98f6" stroke-width=".6"/><path d="M195.6 216.9l4.8-4.8M195.4 214.9v2.2h2.2M200.6 214.1v-2.2h-2.2" stroke="#d8ecff" stroke-width=".7"/>
<circle cx="198.8" cy="228.2" r="2.5" stroke="#2446e6" stroke-width="1.1"/><path d="M197 230.0l-2.4 2.6" stroke="#2446e6" stroke-width="1.3"/><path d="M195 226.4h2.2" stroke="#22c0f0" stroke-width=".7"/>
<path d="M194.4 247.1l7.2-7.2" stroke="#7f98f6" stroke-width=".8"/>
<path d="M194.8 261.0h4.4a2.2 2.2 0 0 0 0-4.4" stroke="#7f98f6" stroke-width=".8"/>
<rect x="194" y="269.7" width="8" height="5.8" stroke="#7f98f6" stroke-width=".8"/>
<path d="M198 283.2l1.1 2.5 2.7.3-2 1.8.6 2.7-2.4-1.4-2.4 1.4.6-2.7-2-1.8 2.7-.3z" stroke="#4f6ff0" stroke-width=".8"/>
<circle cx="198" cy="301.5" r="3.6" stroke="#7f98f6" stroke-width=".8"/>
<path d="M195.6 312.8a3.6 3.6 0 0 1 1.4 6.8" stroke="#7f98f6" stroke-width=".8"/>
<ellipse cx="198" cy="330.5" rx="4" ry="2.6" stroke="#7f98f6" stroke-width=".8"/>
<path d="M194.4 358.1l2-2h5.2v5l-2 2h-5.2z" fill="#2446e6" stroke="none"/><path d="M194.4 358.1h5.2v5M199.6 358.1l2-2" stroke="#9fb4ff" stroke-width=".5"/>
<rect x="194.2" y="370.8" width="7.6" height="6.4" rx=".8" stroke="#7f98f6" stroke-width=".7"/><path d="M195.8 374.0h4.4" stroke="#4f6ff0" stroke-width=".7"/>
<rect x="194.4" y="384.9" width="7.2" height="7.2" stroke="#7f98f6" stroke-width=".6" stroke-dasharray="1.6 1.2"/><path d="M198 385.9v5.2M195.4 388.5h5.2" stroke="#d08a8a" stroke-width=".6"/>
<rect x="196.2" y="399.2" width="5.4" height="5.4" rx=".6" stroke="#2446e6" stroke-width=".8"/><rect x="194.4" y="401.2" width="5.4" height="5.4" rx=".6" fill="#fff" stroke="#2446e6" stroke-width=".8"/>
<rect x="194.2" y="413.9" width="7.6" height="7.2" rx=".6" stroke="#7f98f6" stroke-width=".6"/><circle cx="197" cy="416.7" r="1.7" fill="#2a6cf0"/><rect x="198" y="417.7" width="2.8" height="2.6" fill="#f5c020"/>
<rect x="194.2" y="428.4" width="7.6" height="7.2" rx=".6" stroke="#7f98f6" stroke-width=".6" stroke-dasharray="2 1"/><rect x="194.8" y="429.0" width="3.2" height="2.8" fill="#2fd0b8"/><path d="M198.4 435.0l1.6-3 1.6 3z" fill="#2446e6" stroke="none"/>
<path d="M890.5999999999999 166.9h4.4l2 2v5.2h-6.4z" fill="#fff" stroke="#2446e6" stroke-width=".7"/><rect x="890.5999999999999" y="170.9" width="6.4" height="3.2" fill="#2446e6"/><rect x="892.5999999999999" y="171.9" width="2.4" height="1.2" fill="#cfe0ff"/>
<rect x="890.0" y="253.9" width="7.6" height="5.6" rx=".6" fill="#e9edff" stroke="#7f98f6" stroke-width=".6"/><path d="M891.8 260.9h4" stroke="#7f98f6" stroke-width=".6"/>
<path d="M891.4 257.3l4.6-1.6" stroke="#2fc8c0" stroke-width=".9"/>
<rect x="890.0" y="268.4" width="7.6" height="5.6" rx=".6" fill="#e9edff" stroke="#7f98f6" stroke-width=".6"/><path d="M891.8 275.4h4" stroke="#7f98f6" stroke-width=".6"/>
<rect x="892.0" y="269.4" width="3.6" height="3.6" fill="#3fa8f5"/>
<rect x="890.0" y="282.9" width="7.6" height="5.6" rx=".6" fill="#e9edff" stroke="#7f98f6" stroke-width=".6"/><path d="M891.8 289.9h4" stroke="#7f98f6" stroke-width=".6"/>
<path d="M891.4 285.7h4.8" stroke="#e58ab0" stroke-width="1"/>
<rect x="890.1999999999999" y="298.4" width="6" height="6" rx=".6" stroke="#7f98f6" stroke-width=".6"/><path d="M892.4 302.6l4.6-4.8" stroke="#4f6ff0" stroke-width=".9"/><path d="M891.5999999999999 300.2l1.6-1.2" stroke="#f08ad0" stroke-width=".7"/>
<circle cx="893.8" cy="315.5" r="3.8" stroke="#7f98f6" stroke-width=".7"/><circle cx="893.8" cy="315.5" r="1.9" fill="#f5d64a"/><path d="M893.8 313.6v3.8" stroke="#4f6ff0" stroke-width=".4"/>
<path d="M890.0 329.6l3.8-3.2 3.8 3.2" stroke="#4f6ff0" stroke-width=".8"/><circle cx="893.8" cy="331.4" r="2.2" stroke="#4f6ff0" stroke-width=".7" stroke-dasharray="1 .6"/><circle cx="893.8" cy="331.4" r=".8" fill="#22c0f0"/>
<rect x="890.1999999999999" y="341.3" width="7.2" height="6.4" rx=".6" stroke="#4f6ff0" stroke-width=".6"/><rect x="891.1999999999999" y="342.7" width="5.2" height="2.4" fill="#f59a6a"/>
<path d="M890.4 357.2v3.2q0 1.4 1.4 1.4h4q1.4 0 1.4-1.4v-3.2" stroke="#7f98f6" stroke-width=".6"/><path d="M891.8 358.4q1.6-2.4 4-1.800" stroke="#4f6ff0" stroke-width=".8"/>
<rect x="890.4" y="370.3" width="6.8" height="6.4" rx=".6" stroke="#4f6ff0" stroke-width=".6"/><path d="M892.0 372.1v2.8M895.5999999999999 372.1v2.8" stroke="#4f6ff0" stroke-width=".6"/><circle cx="893.8" cy="373.5" r=".7" fill="#d05a5a"/>
<rect x="890.4" y="384.4" width="6.8" height="7.2" rx=".6" stroke="#4f6ff0" stroke-width=".6"/><rect x="892.1999999999999" y="386.0" width="3.2" height="4" stroke="#7f98f6" stroke-width=".5"/><circle cx="893.8" cy="388.0" r=".7" fill="#2fc86a"/>
<rect x="890.8" y="400.5" width="6.6" height="4.4" stroke="#c9d3fa" stroke-width=".6"/><rect x="890.8" y="400.5" width="2.2" height="4.4" fill="#2446e6"/>
<path d="M890.4 417.6v2.4q0 1 1 1h5q1 0 1-1v-2.400" stroke="#c9d3fa" stroke-width=".6"/><path d="M891.1999999999999 413.8l5 5M896.1999999999999 413.8l-5 5" stroke="#f01c1c" stroke-width="1.2"/>
<path d="M890.1999999999999 429.5v5q0 1 1 1h5.2q1 0 1-1v-3" stroke="#b9c6fa" stroke-width=".6"/><path d="M891.4 431.5l2 2 3.800-4.200" stroke="#22c24a" stroke-width="1.2"/>
<rect x="890.0" y="442.2" width="1.9" height="1.9" fill="#2446e6"/>
<rect x="892.9" y="442.2" width="1.9" height="1.9" fill="#2446e6"/>
<rect x="895.8" y="442.2" width="1.9" height="1.9" fill="#2446e6"/>
<rect x="890.0" y="445.1" width="1.9" height="1.9" fill="#2446e6"/>
<rect x="892.9" y="445.1" width="1.9" height="1.9" fill="#2446e6"/>
<rect x="895.8" y="445.1" width="1.9" height="1.9" fill="#22c24a"/>
<rect x="890.0" y="448.0" width="1.9" height="1.9" fill="#2446e6"/>
<rect x="892.9" y="448.0" width="1.9" height="1.9" fill="#2446e6"/>
<rect x="895.8" y="448.0" width="1.9" height="1.9" fill="#2446e6"/>
</svg>
<div style="position:absolute;left:205px;top:165px;width:682.4px;height:10.2px;background:linear-gradient(to bottom,#e9e9e9,#f1f1f1 55%,#fafafa);"></div>
<div style="position:absolute;left:205px;top:175px;width:9.2px;height:391px;background:linear-gradient(to right,#e7e7e7,#f0f0f0 55%,#fcfcfc);"></div>
<div style="position:absolute;left:214px;top:175px;width:673.4px;height:391px;background:#000;"></div>
<div style="position:absolute;left:226.3px;top:165.18px;height:6.44px;line-height:6.44px;font-size:4.6px;color:#222;white-space:nowrap;letter-spacing:-0.1px;">0</div>
<div style="position:absolute;left:346.3px;top:165.18px;height:6.44px;line-height:6.44px;font-size:4.6px;color:#222;white-space:nowrap;letter-spacing:-0.1px;">1000</div>
<div style="position:absolute;left:466.3px;top:165.18px;height:6.44px;line-height:6.44px;font-size:4.6px;color:#222;white-space:nowrap;letter-spacing:-0.1px;">2000</div>
<div style="position:absolute;left:586.3px;top:165.18px;height:6.44px;line-height:6.44px;font-size:4.6px;color:#222;white-space:nowrap;letter-spacing:-0.1px;">3000</div>
<div style="position:absolute;left:706.3px;top:165.18px;height:6.44px;line-height:6.44px;font-size:4.6px;color:#222;white-space:nowrap;letter-spacing:-0.1px;">4000</div>
<div style="position:absolute;left:826.3px;top:165.18px;height:6.44px;line-height:6.44px;font-size:4.6px;color:#222;white-space:nowrap;letter-spacing:-0.1px;">5000</div>
<div style="position:absolute;left:207.6px;top:518.0px;width:0;height:0"><div style="position:absolute;left:0;top:-3px;height:6px;line-height:6px;font-size:4.6px;color:#222;white-space:nowrap;transform-origin:0 50%;transform:rotate(-90deg);letter-spacing:-0.1px">0</div></div>
<div style="position:absolute;left:207.6px;top:398.0px;width:0;height:0"><div style="position:absolute;left:0;top:-3px;height:6px;line-height:6px;font-size:4.6px;color:#222;white-space:nowrap;transform-origin:0 50%;transform:rotate(-90deg);letter-spacing:-0.1px">1000</div></div>
<div style="position:absolute;left:207.6px;top:278.0px;width:0;height:0"><div style="position:absolute;left:0;top:-3px;height:6px;line-height:6px;font-size:4.6px;color:#222;white-space:nowrap;transform-origin:0 50%;transform:rotate(-90deg);letter-spacing:-0.1px">2000</div></div>
<svg style="left:0;top:0" width="900" height="670" viewBox="0 0 900 670" fill="none">
<defs><clipPath id="cv"><rect x="214" y="175" width="673.4" height="391"/></clipPath></defs>
<path d="M213.3 172.2V175.2M225.3 165.8V175.2M237.3 172.2V175.2M249.3 172.2V175.2M261.3 172.2V175.2M273.3 172.2V175.2M285.3 170V175.2M297.3 172.2V175.2M309.3 172.2V175.2M321.3 172.2V175.2M333.3 172.2V175.2M345.3 165.8V175.2M357.3 172.2V175.2M369.3 172.2V175.2M381.3 172.2V175.2M393.3 172.2V175.2M405.3 170V175.2M417.3 172.2V175.2M429.3 172.2V175.2M441.3 172.2V175.2M453.3 172.2V175.2M465.3 165.8V175.2M477.3 172.2V175.2M489.3 172.2V175.2M501.3 172.2V175.2M513.3 172.2V175.2M525.3 170V175.2M537.3 172.2V175.2M549.3 172.2V175.2M561.3 172.2V175.2M573.3 172.2V175.2M585.3 165.8V175.2M597.3 172.2V175.2M609.3 172.2V175.2M621.3 172.2V175.2M633.3 172.2V175.2M645.3 170V175.2M657.3 172.2V175.2M669.3 172.2V175.2M681.3 172.2V175.2M693.3 172.2V175.2M705.3 165.8V175.2M717.3 172.2V175.2M729.3 172.2V175.2M741.3 172.2V175.2M753.3 172.2V175.2M765.3 170V175.2M777.3 172.2V175.2M789.3 172.2V175.2M801.3 172.2V175.2M813.3 172.2V175.2M825.3 165.8V175.2M837.3 172.2V175.2M849.3 172.2V175.2M861.3 172.2V175.2M873.3 172.2V175.2M885.3 170V175.2M211.6 555.4H214.2M211.6 543.4H214.2M211.6 531.4H214.2M205.6 519.4H214.2M211.6 507.4H214.2M211.6 495.4H214.2M211.6 483.4H214.2M211.6 471.4H214.2M209.6 459.4H214.2M211.6 447.4H214.2M211.6 435.4H214.2M211.6 423.4H214.2M211.6 411.4H214.2M205.6 399.4H214.2M211.6 387.4H214.2M211.6 375.4H214.2M211.6 363.4H214.2M211.6 351.4H214.2M209.6 339.4H214.2M211.6 327.4H214.2M211.6 315.4H214.2M211.6 303.4H214.2M211.6 291.4H214.2M205.6 279.4H214.2M211.6 267.4H214.2M211.6 255.4H214.2M211.6 243.4H214.2M211.6 231.4H214.2M209.6 219.4H214.2M211.6 207.4H214.2M211.6 195.4H214.2M211.6 183.4H214.2" stroke="#1a1a1a" stroke-width=".7"/>
<rect x="690.2" y="170.4" width="1.4" height="1.4" fill="#e01818"/>
<g clip-path="url(#cv)">
<path d="M226.9 222.4h11.9v4.9h-11.9zM239.8 222.4h11.9v4.9h-11.9zM252.7 222.4h11.9v4.9h-11.9zM265.6 222.4h11.9v4.9h-11.9zM278.5 222.4h11.9v4.9h-11.9zM291.4 222.4h11.9v4.9h-11.9zM304.3 222.4h11.9v4.9h-11.9zM317.2 222.4h11.9v4.9h-11.9zM330.1 222.4h11.9v4.9h-11.9zM343 222.4h11.9v4.9h-11.9zM355.9 222.4h11.9v4.9h-11.9zM368.8 222.4h11.9v4.9h-11.9zM381.7 222.4h11.9v4.9h-11.9zM394.6 222.4h11.9v4.9h-11.9zM407.5 222.4h11.9v4.9h-11.9zM420.4 222.4h11.9v4.9h-11.9zM433.3 222.4h11.9v4.9h-11.9zM446.2 222.4h11.9v4.9h-11.9zM459.1 222.4h11.9v4.9h-11.9zM472 222.4h11.9v4.9h-11.9zM484.9 222.4h11.9v4.9h-11.9zM497.8 222.4h11.9v4.9h-11.9zM510.7 222.4h11.9v4.9h-11.9zM523.6 222.4h11.9v4.9h-11.9zM536.5 222.4h11.9v4.9h-11.9zM549.4 222.4h11.9v4.9h-11.9zM562.3 222.4h11.9v4.9h-11.9zM575.2 222.4h11.9v4.9h-11.9zM588.1 222.4h11.9v4.9h-11.9zM601 222.4h11.9v4.9h-11.9zM613.9 222.4h11.9v4.9h-11.9zM626.8 222.4h11.9v4.9h-11.9zM639.7 222.4h11.9v4.9h-11.9zM652.6 222.4h11.9v4.9h-11.9zM665.5 222.4h11.9v4.9h-11.9zM678.4 222.4h11.9v4.9h-11.9zM691.3 222.4h11.9v4.9h-11.9zM704.2 222.4h11.9v4.9h-11.9zM717.1 222.4h11.9v4.9h-11.9zM730 222.4h11.9v4.9h-11.9zM742.9 222.4h11.9v4.9h-11.9zM755.8 222.4h11.9v4.9h-11.9zM768.7 222.4h11.9v4.9h-11.9zM781.6 222.4h11.9v4.9h-11.9zM794.5 222.4h11.9v4.9h-11.9zM807.4 222.4h11.9v4.9h-11.9zM820.3 222.4h11.9v4.9h-11.9zM833.2 222.4h11.9v4.9h-11.9zM846.1 222.4h11.9v4.9h-11.9zM859 222.4h11.9v4.9h-11.9z" fill="#d46246" stroke="#17f017" stroke-width=".55"/>
<path d="M230.3 224.9h6.6M243.2 224.9h6.6M256.1 224.9h6.6M269 224.9h6.6M281.9 224.9h6.6M294.8 224.9h6.6M307.7 224.9h6.6M320.6 224.9h6.6M333.5 224.9h6.6M346.4 224.9h6.6M359.3 224.9h6.6M372.2 224.9h6.6M385.1 224.9h6.6M398 224.9h6.6M410.9 224.9h6.6M423.8 224.9h6.6M436.7 224.9h6.6M449.6 224.9h6.6M462.5 224.9h6.6M475.4 224.9h6.6M488.3 224.9h6.6M501.2 224.9h6.6M514.1 224.9h6.6M527 224.9h6.6M539.9 224.9h6.6M552.8 224.9h6.6M565.7 224.9h6.6M578.6 224.9h6.6M591.5 224.9h6.6M604.4 224.9h6.6M617.3 224.9h6.6M630.2 224.9h6.6M643.1 224.9h6.6M656 224.9h6.6M668.9 224.9h6.6M681.8 224.9h6.6M694.7 224.9h6.6M707.6 224.9h6.6M720.5 224.9h6.6M733.4 224.9h6.6M746.3 224.9h6.6M759.2 224.9h6.6M772.1 224.9h6.6M785 224.9h6.6M797.9 224.9h6.6M810.8 224.9h6.6M823.7 224.9h6.6M836.6 224.9h6.6M849.5 224.9h6.6M862.4 224.9h6.6" stroke="#c2553c" stroke-width=".8"/>
<g fill="#3fd03f"><circle cx="228.6" cy="224.8" r=".65"/><circle cx="241.5" cy="224.8" r=".65"/><circle cx="254.4" cy="224.8" r=".65"/><circle cx="267.3" cy="224.8" r=".65"/><circle cx="280.2" cy="224.8" r=".65"/><circle cx="293.1" cy="224.8" r=".65"/><circle cx="306" cy="224.8" r=".65"/><circle cx="318.9" cy="224.8" r=".65"/><circle cx="331.8" cy="224.8" r=".65"/><circle cx="344.7" cy="224.8" r=".65"/><circle cx="357.6" cy="224.8" r=".65"/><circle cx="370.5" cy="224.8" r=".65"/><circle cx="383.4" cy="224.8" r=".65"/><circle cx="396.3" cy="224.8" r=".65"/><circle cx="409.2" cy="224.8" r=".65"/><circle cx="422.1" cy="224.8" r=".65"/><circle cx="435" cy="224.8" r=".65"/><circle cx="447.9" cy="224.8" r=".65"/><circle cx="460.8" cy="224.8" r=".65"/><circle cx="473.7" cy="224.8" r=".65"/><circle cx="486.6" cy="224.8" r=".65"/><circle cx="499.5" cy="224.8" r=".65"/><circle cx="512.4" cy="224.8" r=".65"/><circle cx="525.3" cy="224.8" r=".65"/><circle cx="538.2" cy="224.8" r=".65"/><circle cx="551.1" cy="224.8" r=".65"/><circle cx="564" cy="224.8" r=".65"/><circle cx="576.9" cy="224.8" r=".65"/><circle cx="589.8" cy="224.8" r=".65"/><circle cx="602.7" cy="224.8" r=".65"/><circle cx="615.6" cy="224.8" r=".65"/><circle cx="628.5" cy="224.8" r=".65"/><circle cx="641.4" cy="224.8" r=".65"/><circle cx="654.3" cy="224.8" r=".65"/><circle cx="667.2" cy="224.8" r=".65"/><circle cx="680.1" cy="224.8" r=".65"/><circle cx="693" cy="224.8" r=".65"/><circle cx="705.9" cy="224.8" r=".65"/><circle cx="718.8" cy="224.8" r=".65"/><circle cx="731.7" cy="224.8" r=".65"/><circle cx="744.6" cy="224.8" r=".65"/><circle cx="757.5" cy="224.8" r=".65"/><circle cx="770.4" cy="224.8" r=".65"/><circle cx="783.3" cy="224.8" r=".65"/><circle cx="796.2" cy="224.8" r=".65"/><circle cx="809.1" cy="224.8" r=".65"/><circle cx="822" cy="224.8" r=".65"/><circle cx="834.9" cy="224.8" r=".65"/><circle cx="847.8" cy="224.8" r=".65"/><circle cx="860.7" cy="224.8" r=".65"/></g>
<path d="M230.1 228.3L283.9 228.3Q285.9 228.4 285.7 230.5Q285.5 232.6 283.5 232.8L259.5 234.65L244 235.75Q239.1 236.2 236.7 239.9Q235.9 241.3 235.1 241.8L231.1 241.8Q230.3 241 230.8 238Q231.7 235 230.8 232Q230.1 229.6 230.1 228.3ZM230.1 243.55L283.9 243.55Q285.9 243.65 285.7 245.75Q285.5 247.85 283.5 248.05L259.5 249.9L244 251Q239.1 251.45 236.7 255.15Q235.9 256.55 235.1 257.05L231.1 257.05Q230.3 256.25 230.8 253.25Q231.7 250.25 230.8 247.25Q230.1 244.85 230.1 243.55ZM300.16 228.3L353.96 228.3Q355.96 228.4 355.76 230.5Q355.56 232.6 353.56 232.8L329.56 234.65L314.06 235.75Q309.16 236.2 306.76 239.9Q305.96 241.3 305.16 241.8L301.16 241.8Q300.36 241 300.86 238Q301.76 235 300.86 232Q300.16 229.6 300.16 228.3ZM300.16 243.55L353.96 243.55Q355.96 243.65 355.76 245.75Q355.56 247.85 353.56 248.05L329.56 249.9L314.06 251Q309.16 251.45 306.76 255.15Q305.96 256.55 305.16 257.05L301.16 257.05Q300.36 256.25 300.86 253.25Q301.76 250.25 300.86 247.25Q300.16 244.85 300.16 243.55ZM370.22 228.3L424.02 228.3Q426.02 228.4 425.82 230.5Q425.62 232.6 423.62 232.8L399.62 234.65L384.12 235.75Q379.22 236.2 376.82 239.9Q376.02 241.3 375.22 241.8L371.22 241.8Q370.42 241 370.92 238Q371.82 235 370.92 232Q370.22 229.6 370.22 228.3ZM370.22 243.55L424.02 243.55Q426.02 243.65 425.82 245.75Q425.62 247.85 423.62 248.05L399.62 249.9L384.12 251Q379.22 251.45 376.82 255.15Q376.02 256.55 375.22 257.05L371.22 257.05Q370.42 256.25 370.92 253.25Q371.82 250.25 370.92 247.25Q370.22 244.85 370.22 243.55ZM440.28 228.3L494.08 228.3Q496.08 228.4 495.88 230.5Q495.68 232.6 493.68 232.8L469.68 234.65L454.18 235.75Q449.28 236.2 446.88 239.9Q446.08 241.3 445.28 241.8L441.28 241.8Q440.48 241 440.98 238Q441.88 235 440.98 232Q440.28 229.6 440.28 228.3ZM440.28 243.55L494.08 243.55Q496.08 243.65 495.88 245.75Q495.68 247.85 493.68 248.05L469.68 249.9L454.18 251Q449.28 251.45 446.88 255.15Q446.08 256.55 445.28 257.05L441.28 257.05Q440.48 256.25 440.98 253.25Q441.88 250.25 440.98 247.25Q440.28 244.85 440.28 243.55ZM510.34 228.3L564.14 228.3Q566.14 228.4 565.94 230.5Q565.74 232.6 563.74 232.8L539.74 234.65L524.24 235.75Q519.34 236.2 516.94 239.9Q516.14 241.3 515.34 241.8L511.34 241.8Q510.54 241 511.04 238Q511.94 235 511.04 232Q510.34 229.6 510.34 228.3ZM510.34 243.55L564.14 243.55Q566.14 243.65 565.94 245.75Q565.74 247.85 563.74 248.05L539.74 249.9L524.24 251Q519.34 251.45 516.94 255.15Q516.14 256.55 515.34 257.05L511.34 257.05Q510.54 256.25 511.04 253.25Q511.94 250.25 511.04 247.25Q510.34 244.85 510.34 243.55ZM580.4 228.3L634.2 228.3Q636.2 228.4 636 230.5Q635.8 232.6 633.8 232.8L609.8 234.65L594.3 235.75Q589.4 236.2 587 239.9Q586.2 241.3 585.4 241.8L581.4 241.8Q580.6 241 581.1 238Q582 235 581.1 232Q580.4 229.6 580.4 228.3ZM580.4 243.55L634.2 243.55Q636.2 243.65 636 245.75Q635.8 247.85 633.8 248.05L609.8 249.9L594.3 251Q589.4 251.45 587 255.15Q586.2 256.55 585.4 257.05L581.4 257.05Q580.6 256.25 581.1 253.25Q582 250.25 581.1 247.25Q580.4 244.85 580.4 243.55ZM650.46 228.3L704.26 228.3Q706.26 228.4 706.06 230.5Q705.86 232.6 703.86 232.8L679.86 234.65L664.36 235.75Q659.46 236.2 657.06 239.9Q656.26 241.3 655.46 241.8L651.46 241.8Q650.66 241 651.16 238Q652.06 235 651.16 232Q650.46 229.6 650.46 228.3ZM650.46 243.55L704.26 243.55Q706.26 243.65 706.06 245.75Q705.86 247.85 703.86 248.05L679.86 249.9L664.36 251Q659.46 251.45 657.06 255.15Q656.26 256.55 655.46 257.05L651.46 257.05Q650.66 256.25 651.16 253.25Q652.06 250.25 651.16 247.25Q650.46 244.85 650.46 243.55ZM720.52 228.3L774.32 228.3Q776.32 228.4 776.12 230.5Q775.92 232.6 773.92 232.8L749.92 234.65L734.42 235.75Q729.52 236.2 727.12 239.9Q726.32 241.3 725.52 241.8L721.52 241.8Q720.72 241 721.22 238Q722.12 235 721.22 232Q720.52 229.6 720.52 228.3ZM720.52 243.55L774.32 243.55Q776.32 243.65 776.12 245.75Q775.92 247.85 773.92 248.05L749.92 249.9L734.42 251Q729.52 251.45 727.12 255.15Q726.32 256.55 725.52 257.05L721.52 257.05Q720.72 256.25 721.22 253.25Q722.12 250.25 721.22 247.25Q720.52 244.85 720.52 243.55ZM790.58 228.3L844.38 228.3Q846.38 228.4 846.18 230.5Q845.98 232.6 843.98 232.8L819.98 234.65L804.48 235.75Q799.58 236.2 797.18 239.9Q796.38 241.3 795.58 241.8L791.58 241.8Q790.78 241 791.28 238Q792.18 235 791.28 232Q790.58 229.6 790.58 228.3ZM790.58 243.55L844.38 243.55Q846.38 243.65 846.18 245.75Q845.98 247.85 843.98 248.05L819.98 249.9L804.48 251Q799.58 251.45 797.18 255.15Q796.38 256.55 795.58 257.05L791.58 257.05Q790.78 256.25 791.28 253.25Q792.18 250.25 791.28 247.25Q790.58 244.85 790.58 243.55Z" fill="#b855c1" stroke="#17f017" stroke-width=".9" stroke-linejoin="round"/>
<path d="M292.9 241.8L239.1 241.8Q237.1 241.7 237.3 239.6Q237.5 237.5 239.5 237.3L263.5 235.45L279 234.35Q283.9 233.9 286.3 230.2Q287.1 228.8 287.9 228.3L291.9 228.3Q292.7 229.1 292.2 232.1Q291.3 235.1 292.2 238.1Q292.9 240.5 292.9 241.8ZM292.9 257.05L239.1 257.05Q237.1 256.95 237.3 254.85Q237.5 252.75 239.5 252.55L263.5 250.7L279 249.6Q283.9 249.15 286.3 245.45Q287.1 244.05 287.9 243.55L291.9 243.55Q292.7 244.35 292.2 247.35Q291.3 250.35 292.2 253.35Q292.9 255.75 292.9 257.05ZM362.96 241.8L309.16 241.8Q307.16 241.7 307.36 239.6Q307.56 237.5 309.56 237.3L333.56 235.45L349.06 234.35Q353.96 233.9 356.36 230.2Q357.16 228.8 357.96 228.3L361.96 228.3Q362.76 229.1 362.26 232.1Q361.36 235.1 362.26 238.1Q362.96 240.5 362.96 241.8ZM362.96 257.05L309.16 257.05Q307.16 256.95 307.36 254.85Q307.56 252.75 309.56 252.55L333.56 250.7L349.06 249.6Q353.96 249.15 356.36 245.45Q357.16 244.05 357.96 243.55L361.96 243.55Q362.76 244.35 362.26 247.35Q361.36 250.35 362.26 253.35Q362.96 255.75 362.96 257.05ZM433.02 241.8L379.22 241.8Q377.22 241.7 377.42 239.6Q377.62 237.5 379.62 237.3L403.62 235.45L419.12 234.35Q424.02 233.9 426.42 230.2Q427.22 228.8 428.02 228.3L432.02 228.3Q432.82 229.1 432.32 232.1Q431.42 235.1 432.32 238.1Q433.02 240.5 433.02 241.8ZM433.02 257.05L379.22 257.05Q377.22 256.95 377.42 254.85Q377.62 252.75 379.62 252.55L403.62 250.7L419.12 249.6Q424.02 249.15 426.42 245.45Q427.22 244.05 428.02 243.55L432.02 243.55Q432.82 244.35 432.32 247.35Q431.42 250.35 432.32 253.35Q433.02 255.75 433.02 257.05ZM503.08 241.8L449.28 241.8Q447.28 241.7 447.48 239.6Q447.68 237.5 449.68 237.3L473.68 235.45L489.18 234.35Q494.08 233.9 496.48 230.2Q497.28 228.8 498.08 228.3L502.08 228.3Q502.88 229.1 502.38 232.1Q501.48 235.1 502.38 238.1Q503.08 240.5 503.08 241.8ZM503.08 257.05L449.28 257.05Q447.28 256.95 447.48 254.85Q447.68 252.75 449.68 252.55L473.68 250.7L489.18 249.6Q494.08 249.15 496.48 245.45Q497.28 244.05 498.08 243.55L502.08 243.55Q502.88 244.35 502.38 247.35Q501.48 250.35 502.38 253.35Q503.08 255.75 503.08 257.05ZM573.14 241.8L519.34 241.8Q517.34 241.7 517.54 239.6Q517.74 237.5 519.74 237.3L543.74 235.45L559.24 234.35Q564.14 233.9 566.54 230.2Q567.34 228.8 568.14 228.3L572.14 228.3Q572.94 229.1 572.44 232.1Q571.54 235.1 572.44 238.1Q573.14 240.5 573.14 241.8ZM573.14 257.05L519.34 257.05Q517.34 256.95 517.54 254.85Q517.74 252.75 519.74 252.55L543.74 250.7L559.24 249.6Q564.14 249.15 566.54 245.45Q567.34 244.05 568.14 243.55L572.14 243.55Q572.94 244.35 572.44 247.35Q571.54 250.35 572.44 253.35Q573.14 255.75 573.14 257.05ZM643.2 241.8L589.4 241.8Q587.4 241.7 587.6 239.6Q587.8 237.5 589.8 237.3L613.8 235.45L629.3 234.35Q634.2 233.9 636.6 230.2Q637.4 228.8 638.2 228.3L642.2 228.3Q643 229.1 642.5 232.1Q641.6 235.1 642.5 238.1Q643.2 240.5 643.2 241.8ZM643.2 257.05L589.4 257.05Q587.4 256.95 587.6 254.85Q587.8 252.75 589.8 252.55L613.8 250.7L629.3 249.6Q634.2 249.15 636.6 245.45Q637.4 244.05 638.2 243.55L642.2 243.55Q643 244.35 642.5 247.35Q641.6 250.35 642.5 253.35Q643.2 255.75 643.2 257.05ZM713.26 241.8L659.46 241.8Q657.46 241.7 657.66 239.6Q657.86 237.5 659.86 237.3L683.86 235.45L699.36 234.35Q704.26 233.9 706.66 230.2Q707.46 228.8 708.26 228.3L712.26 228.3Q713.06 229.1 712.56 232.1Q711.66 235.1 712.56 238.1Q713.26 240.5 713.26 241.8ZM713.26 257.05L659.46 257.05Q657.46 256.95 657.66 254.85Q657.86 252.75 659.86 252.55L683.86 250.7L699.36 249.6Q704.26 249.15 706.66 245.45Q707.46 244.05 708.26 243.55L712.26 243.55Q713.06 244.35 712.56 247.35Q711.66 250.35 712.56 253.35Q713.26 255.75 713.26 257.05ZM783.32 241.8L729.52 241.8Q727.52 241.7 727.72 239.6Q727.92 237.5 729.92 237.3L753.92 235.45L769.42 234.35Q774.32 233.9 776.72 230.2Q777.52 228.8 778.32 228.3L782.32 228.3Q783.12 229.1 782.62 232.1Q781.72 235.1 782.62 238.1Q783.32 240.5 783.32 241.8ZM783.32 257.05L729.52 257.05Q727.52 256.95 727.72 254.85Q727.92 252.75 729.92 252.55L753.92 250.7L769.42 249.6Q774.32 249.15 776.72 245.45Q777.52 244.05 778.32 243.55L782.32 243.55Q783.12 244.35 782.62 247.35Q781.72 250.35 782.62 253.35Q783.32 255.75 783.32 257.05ZM853.38 241.8L799.58 241.8Q797.58 241.7 797.78 239.6Q797.98 237.5 799.98 237.3L823.98 235.45L839.48 234.35Q844.38 233.9 846.78 230.2Q847.58 228.8 848.38 228.3L852.38 228.3Q853.18 229.1 852.68 232.1Q851.78 235.1 852.68 238.1Q853.38 240.5 853.38 241.8ZM853.38 257.05L799.58 257.05Q797.58 256.95 797.78 254.85Q797.98 252.75 799.98 252.55L823.98 250.7L839.48 249.6Q844.38 249.15 846.78 245.45Q847.58 244.05 848.38 243.55L852.38 243.55Q853.18 244.35 852.68 247.35Q851.78 250.35 852.68 253.35Q853.38 255.75 853.38 257.05Z" fill="#b855c1" stroke="#17f017" stroke-width=".9" stroke-linejoin="round"/>
<path d="M294.7 228.6L297.81 230.8L295.32 233L298.03 235.2L295.54 237.4L298.25 239.6L295.76 241.8L298.47 244L295.98 246.2L298.69 248.4L296.2 250.6L298.91 252.8L296.42 255L299.13 257.2M364.76 228.6L367.87 230.8L365.38 233L368.09 235.2L365.6 237.4L368.31 239.6L365.82 241.8L368.53 244L366.04 246.2L368.75 248.4L366.26 250.6L368.97 252.8L366.48 255L369.19 257.2M434.82 228.6L437.93 230.8L435.44 233L438.15 235.2L435.66 237.4L438.37 239.6L435.88 241.8L438.59 244L436.1 246.2L438.81 248.4L436.32 250.6L439.03 252.8L436.54 255L439.25 257.2M504.88 228.6L507.99 230.8L505.5 233L508.21 235.2L505.72 237.4L508.43 239.6L505.94 241.8L508.65 244L506.16 246.2L508.87 248.4L506.38 250.6L509.09 252.8L506.6 255L509.31 257.2M574.94 228.6L578.05 230.8L575.56 233L578.27 235.2L575.78 237.4L578.49 239.6L576 241.8L578.71 244L576.22 246.2L578.93 248.4L576.44 250.6L579.15 252.8L576.66 255L579.37 257.2M645 228.6L648.11 230.8L645.62 233L648.33 235.2L645.84 237.4L648.55 239.6L646.06 241.8L648.77 244L646.28 246.2L648.99 248.4L646.5 250.6L649.21 252.8L646.72 255L649.43 257.2M715.06 228.6L718.17 230.8L715.68 233L718.39 235.2L715.9 237.4L718.61 239.6L716.12 241.8L718.83 244L716.34 246.2L719.05 248.4L716.56 250.6L719.27 252.8L716.78 255L719.49 257.2M785.12 228.6L788.23 230.8L785.74 233L788.45 235.2L785.96 237.4L788.67 239.6L786.18 241.8L788.89 244L786.4 246.2L789.11 248.4L786.62 250.6L789.33 252.8L786.84 255L789.55 257.2" stroke="#17f017" stroke-width=".6" stroke-dasharray="1.2 .8"/>
<path d="M858.8 233.7h11.6v4.1h-11.600z" fill="#d46246" stroke="#17f017" stroke-width=".8"/>
<path d="M858.7 238.9h16.4v12.800l-3.800 5.800h-8.800l-3.800-5.800z" fill="#b3a970" stroke="#17f017" stroke-width=".6"/>
<path d="M860.4 240.600h1.200v1.200h-1.200zM872.200 240.600h1.200v1.200h-1.200zM862.600 254.400h1.200v1.200h-1.200zM870 254.400h1.200v1.200h-1.200z" fill="#0c5a1c"/>
<path d="M226.65 258L247.05 258L247.85 261L267.45 261L268.25 258L288.65 258L288.65 270L278.69 303.03Q277.1 308.3 271.6 308.3L243.7 308.3Q238.2 308.3 236.61 303.03L226.65 270ZM280 310.27L300.4 310.27L301.2 307.27L320.8 307.27L321.6 310.27L342 310.27L342 298.27L332.01 264.54Q330.45 259.27 324.95 259.27L297.05 259.27Q291.55 259.27 289.99 264.54L280 298.27ZM333.35 258L353.75 258L354.55 261L374.15 261L374.95 258L395.35 258L395.35 270L385.39 303.03Q383.8 308.3 378.3 308.3L350.4 308.3Q344.9 308.3 343.31 303.03L333.35 270ZM386.7 310.27L407.1 310.27L407.9 307.27L427.5 307.27L428.3 310.27L448.7 310.27L448.7 298.27L438.71 264.54Q437.15 259.27 431.65 259.27L403.75 259.27Q398.25 259.27 396.69 264.54L386.7 298.27ZM440.05 258L460.45 258L461.25 261L480.85 261L481.65 258L502.05 258L502.05 270L492.09 303.03Q490.5 308.3 485 308.3L457.1 308.3Q451.6 308.3 450.01 303.03L440.05 270ZM493.4 310.27L513.8 310.27L514.6 307.27L534.2 307.27L535 310.27L555.4 310.27L555.4 298.27L545.41 264.54Q543.85 259.27 538.35 259.27L510.45 259.27Q504.95 259.27 503.39 264.54L493.4 298.27ZM546.75 258L567.15 258L567.95 261L587.55 261L588.35 258L608.75 258L608.75 270L598.79 303.03Q597.2 308.3 591.7 308.3L563.8 308.3Q558.3 308.3 556.71 303.03L546.75 270ZM600.1 310.27L620.5 310.27L621.3 307.27L640.9 307.27L641.7 310.27L662.1 310.27L662.1 298.27L652.11 264.54Q650.55 259.27 645.05 259.27L617.15 259.27Q611.65 259.27 610.09 264.54L600.1 298.27ZM653.45 258L673.85 258L674.65 261L694.25 261L695.05 258L715.45 258L715.45 270L705.49 303.03Q703.9 308.3 698.4 308.3L670.5 308.3Q665 308.3 663.41 303.03L653.45 270ZM706.8 310.27L727.2 310.27L728 307.27L747.6 307.27L748.4 310.27L768.8 310.27L768.8 298.27L758.81 264.54Q757.25 259.27 751.75 259.27L723.85 259.27Q718.35 259.27 716.79 264.54L706.8 298.27ZM760.15 258L780.55 258L781.35 261L800.95 261L801.75 258L822.15 258L822.15 270L812.19 303.03Q810.6 308.3 805.1 308.3L777.2 308.3Q771.7 308.3 770.11 303.03L760.15 270ZM813.5 310.27L833.9 310.27L834.7 307.27L854.3 307.27L855.1 310.27L875.5 310.27L875.5 298.27L865.51 264.54Q863.95 259.27 858.45 259.27L830.55 259.27Q825.05 259.27 823.49 264.54L813.5 298.27ZM226.65 310.27L247.05 310.27L247.85 313.27L267.45 313.27L268.25 310.27L288.65 310.27L288.65 322.27L278.69 355.3Q277.1 360.57 271.6 360.57L243.7 360.57Q238.2 360.57 236.61 355.3L226.65 322.27ZM280 362.54L300.4 362.54L301.2 359.54L320.8 359.54L321.6 362.54L342 362.54L342 350.54L332.01 316.81Q330.45 311.54 324.95 311.54L297.05 311.54Q291.55 311.54 289.99 316.81L280 350.54ZM333.35 310.27L353.75 310.27L354.55 313.27L374.15 313.27L374.95 310.27L395.35 310.27L395.35 322.27L385.39 355.3Q383.8 360.57 378.3 360.57L350.4 360.57Q344.9 360.57 343.31 355.3L333.35 322.27ZM386.7 362.54L407.1 362.54L407.9 359.54L427.5 359.54L428.3 362.54L448.7 362.54L448.7 350.54L438.71 316.81Q437.15 311.54 431.65 311.54L403.75 311.54Q398.25 311.54 396.69 316.81L386.7 350.54ZM440.05 310.27L460.45 310.27L461.25 313.27L480.85 313.27L481.65 310.27L502.05 310.27L502.05 322.27L492.09 355.3Q490.5 360.57 485 360.57L457.1 360.57Q451.6 360.57 450.01 355.3L440.05 322.27ZM493.4 362.54L513.8 362.54L514.6 359.54L534.2 359.54L535 362.54L555.4 362.54L555.4 350.54L545.41 316.81Q543.85 311.54 538.35 311.54L510.45 311.54Q504.95 311.54 503.39 316.81L493.4 350.54ZM546.75 310.27L567.15 310.27L567.95 313.27L587.55 313.27L588.35 310.27L608.75 310.27L608.75 322.27L598.79 355.3Q597.2 360.57 591.7 360.57L563.8 360.57Q558.3 360.57 556.71 355.3L546.75 322.27ZM600.1 362.54L620.5 362.54L621.3 359.54L640.9 359.54L641.7 362.54L662.1 362.54L662.1 350.54L652.11 316.81Q650.55 311.54 645.05 311.54L617.15 311.54Q611.65 311.54 610.09 316.81L600.1 350.54ZM653.45 310.27L673.85 310.27L674.65 313.27L694.25 313.27L695.05 310.27L715.45 310.27L715.45 322.27L705.49 355.3Q703.9 360.57 698.4 360.57L670.5 360.57Q665 360.57 663.41 355.3L653.45 322.27ZM706.8 362.54L727.2 362.54L728 359.54L747.6 359.54L748.4 362.54L768.8 362.54L768.8 350.54L758.81 316.81Q757.25 311.54 751.75 311.54L723.85 311.54Q718.35 311.54 716.79 316.81L706.8 350.54ZM760.15 310.27L780.55 310.27L781.35 313.27L800.95 313.27L801.75 310.27L822.15 310.27L822.15 322.27L812.19 355.3Q810.6 360.57 805.1 360.57L777.2 360.57Q771.7 360.57 770.11 355.3L760.15 322.27ZM813.5 362.54L833.9 362.54L834.7 359.54L854.3 359.54L855.1 362.54L875.5 362.54L875.5 350.54L865.51 316.81Q863.95 311.54 858.45 311.54L830.55 311.54Q825.05 311.54 823.49 316.81L813.5 350.54ZM226.65 362.54L247.05 362.54L247.85 365.54L267.45 365.54L268.25 362.54L288.65 362.54L288.65 374.54L278.69 407.57Q277.1 412.84 271.6 412.84L243.7 412.84Q238.2 412.84 236.61 407.57L226.65 374.54ZM280 414.81L300.4 414.81L301.2 411.81L320.8 411.81L321.6 414.81L342 414.81L342 402.81L332.01 369.08Q330.45 363.81 324.95 363.81L297.05 363.81Q291.55 363.81 289.99 369.08L280 402.81ZM333.35 362.54L353.75 362.54L354.55 365.54L374.15 365.54L374.95 362.54L395.35 362.54L395.35 374.54L385.39 407.57Q383.8 412.84 378.3 412.84L350.4 412.84Q344.9 412.84 343.31 407.57L333.35 374.54ZM386.7 414.81L407.1 414.81L407.9 411.81L427.5 411.81L428.3 414.81L448.7 414.81L448.7 402.81L438.71 369.08Q437.15 363.81 431.65 363.81L403.75 363.81Q398.25 363.81 396.69 369.08L386.7 402.81ZM440.05 362.54L460.45 362.54L461.25 365.54L480.85 365.54L481.65 362.54L502.05 362.54L502.05 374.54L492.09 407.57Q490.5 412.84 485 412.84L457.1 412.84Q451.6 412.84 450.01 407.57L440.05 374.54ZM493.4 414.81L513.8 414.81L514.6 411.81L534.2 411.81L535 414.81L555.4 414.81L555.4 402.81L545.41 369.08Q543.85 363.81 538.35 363.81L510.45 363.81Q504.95 363.81 503.39 369.08L493.4 402.81ZM546.75 362.54L567.15 362.54L567.95 365.54L587.55 365.54L588.35 362.54L608.75 362.54L608.75 374.54L598.79 407.57Q597.2 412.84 591.7 412.84L563.8 412.84Q558.3 412.84 556.71 407.57L546.75 374.54ZM600.1 414.81L620.5 414.81L621.3 411.81L640.9 411.81L641.7 414.81L662.1 414.81L662.1 402.81L652.11 369.08Q650.55 363.81 645.05 363.81L617.15 363.81Q611.65 363.81 610.09 369.08L600.1 402.81ZM653.45 362.54L673.85 362.54L674.65 365.54L694.25 365.54L695.05 362.54L715.45 362.54L715.45 374.54L705.49 407.57Q703.9 412.84 698.4 412.84L670.5 412.84Q665 412.84 663.41 407.57L653.45 374.54ZM706.8 414.81L727.2 414.81L728 411.81L747.6 411.81L748.4 414.81L768.8 414.81L768.8 402.81L758.81 369.08Q757.25 363.81 751.75 363.81L723.85 363.81Q718.35 363.81 716.79 369.08L706.8 402.81ZM760.15 362.54L780.55 362.54L781.35 365.54L800.95 365.54L801.75 362.54L822.15 362.54L822.15 374.54L812.19 407.57Q810.6 412.84 805.1 412.84L777.2 412.84Q771.7 412.84 770.11 407.57L760.15 374.54ZM813.5 414.81L833.9 414.81L834.7 411.81L854.3 411.81L855.1 414.81L875.5 414.81L875.5 402.81L865.51 369.08Q863.95 363.81 858.45 363.81L830.55 363.81Q825.05 363.81 823.49 369.08L813.5 402.81ZM226.65 414.81L247.05 414.81L247.85 417.81L267.45 417.81L268.25 414.81L288.65 414.81L288.65 426.81L278.69 459.84Q277.1 465.11 271.6 465.11L243.7 465.11Q238.2 465.11 236.61 459.84L226.65 426.81ZM280 467.08L300.4 467.08L301.2 464.08L320.8 464.08L321.6 467.08L342 467.08L342 455.08L332.01 421.35Q330.45 416.08 324.95 416.08L297.05 416.08Q291.55 416.08 289.99 421.35L280 455.08ZM333.35 414.81L353.75 414.81L354.55 417.81L374.15 417.81L374.95 414.81L395.35 414.81L395.35 426.81L385.39 459.84Q383.8 465.11 378.3 465.11L350.4 465.11Q344.9 465.11 343.31 459.84L333.35 426.81ZM386.7 467.08L407.1 467.08L407.9 464.08L427.5 464.08L428.3 467.08L448.7 467.08L448.7 455.08L438.71 421.35Q437.15 416.08 431.65 416.08L403.75 416.08Q398.25 416.08 396.69 421.35L386.7 455.08ZM440.05 414.81L460.45 414.81L461.25 417.81L480.85 417.81L481.65 414.81L502.05 414.81L502.05 426.81L492.09 459.84Q490.5 465.11 485 465.11L457.1 465.11Q451.6 465.11 450.01 459.84L440.05 426.81ZM493.4 467.08L513.8 467.08L514.6 464.08L534.2 464.08L535 467.08L555.4 467.08L555.4 455.08L545.41 421.35Q543.85 416.08 538.35 416.08L510.45 416.08Q504.95 416.08 503.39 421.35L493.4 455.08ZM546.75 414.81L567.15 414.81L567.95 417.81L587.55 417.81L588.35 414.81L608.75 414.81L608.75 426.81L598.79 459.84Q597.2 465.11 591.7 465.11L563.8 465.11Q558.3 465.11 556.71 459.84L546.75 426.81ZM600.1 467.08L620.5 467.08L621.3 464.08L640.9 464.08L641.7 467.08L662.1 467.08L662.1 455.08L652.11 421.35Q650.55 416.08 645.05 416.08L617.15 416.08Q611.65 416.08 610.09 421.35L600.1 455.08ZM653.45 414.81L673.85 414.81L674.65 417.81L694.25 417.81L695.05 414.81L715.45 414.81L715.45 426.81L705.49 459.84Q703.9 465.11 698.4 465.11L670.5 465.11Q665 465.11 663.41 459.84L653.45 426.81ZM706.8 467.08L727.2 467.08L728 464.08L747.6 464.08L748.4 467.08L768.8 467.08L768.8 455.08L758.81 421.35Q757.25 416.08 751.75 416.08L723.85 416.08Q718.35 416.08 716.79 421.35L706.8 455.08ZM760.15 414.81L780.55 414.81L781.35 417.81L800.95 417.81L801.75 414.81L822.15 414.81L822.15 426.81L812.19 459.84Q810.6 465.11 805.1 465.11L777.2 465.11Q771.7 465.11 770.11 459.84L760.15 426.81ZM813.5 467.08L833.9 467.08L834.7 464.08L854.3 464.08L855.1 467.08L875.5 467.08L875.5 455.08L865.51 421.35Q863.95 416.08 858.45 416.08L830.55 416.08Q825.05 416.08 823.49 421.35L813.5 455.08ZM226.65 467.08L247.05 467.08L247.85 470.08L267.45 470.08L268.25 467.08L288.65 467.08L288.65 479.08L278.69 512.11Q277.1 517.38 271.6 517.38L243.7 517.38Q238.2 517.38 236.61 512.11L226.65 479.08ZM280 519.35L300.4 519.35L301.2 516.35L320.8 516.35L321.6 519.35L342 519.35L342 507.35L332.01 473.62Q330.45 468.35 324.95 468.35L297.05 468.35Q291.55 468.35 289.99 473.62L280 507.35ZM333.35 467.08L353.75 467.08L354.55 470.08L374.15 470.08L374.95 467.08L395.35 467.08L395.35 479.08L385.39 512.11Q383.8 517.38 378.3 517.38L350.4 517.38Q344.9 517.38 343.31 512.11L333.35 479.08ZM386.7 519.35L407.1 519.35L407.9 516.35L427.5 516.35L428.3 519.35L448.7 519.35L448.7 507.35L438.71 473.62Q437.15 468.35 431.65 468.35L403.75 468.35Q398.25 468.35 396.69 473.62L386.7 507.35ZM440.05 467.08L460.45 467.08L461.25 470.08L480.85 470.08L481.65 467.08L502.05 467.08L502.05 479.08L492.09 512.11Q490.5 517.38 485 517.38L457.1 517.38Q451.6 517.38 450.01 512.11L440.05 479.08ZM493.4 519.35L513.8 519.35L514.6 516.35L534.2 516.35L535 519.35L555.4 519.35L555.4 507.35L545.41 473.62Q543.85 468.35 538.35 468.35L510.45 468.35Q504.95 468.35 503.39 473.62L493.4 507.35ZM546.75 467.08L567.15 467.08L567.95 470.08L587.55 470.08L588.35 467.08L608.75 467.08L608.75 479.08L598.79 512.11Q597.2 517.38 591.7 517.38L563.8 517.38Q558.3 517.38 556.71 512.11L546.75 479.08ZM600.1 519.35L620.5 519.35L621.3 516.35L640.9 516.35L641.7 519.35L662.1 519.35L662.1 507.35L652.11 473.62Q650.55 468.35 645.05 468.35L617.15 468.35Q611.65 468.35 610.09 473.62L600.1 507.35ZM653.45 467.08L673.85 467.08L674.65 470.08L694.25 470.08L695.05 467.08L715.45 467.08L715.45 479.08L705.49 512.11Q703.9 517.38 698.4 517.38L670.5 517.38Q665 517.38 663.41 512.11L653.45 479.08ZM706.8 519.35L727.2 519.35L728 516.35L747.6 516.35L748.4 519.35L768.8 519.35L768.8 507.35L758.81 473.62Q757.25 468.35 751.75 468.35L723.85 468.35Q718.35 468.35 716.79 473.62L706.8 507.35ZM760.15 467.08L780.55 467.08L781.35 470.08L800.95 470.08L801.75 467.08L822.15 467.08L822.15 479.08L812.19 512.11Q810.6 517.38 805.1 517.38L777.2 517.38Q771.7 517.38 770.11 512.11L760.15 479.08ZM813.5 519.35L833.9 519.35L834.7 516.35L854.3 516.35L855.1 519.35L875.5 519.35L875.5 507.35L865.51 473.62Q863.95 468.35 858.45 468.35L830.55 468.35Q825.05 468.35 823.49 473.62L813.5 507.35Z" fill="#24b080" stroke="#17f017" stroke-width=".72" stroke-linejoin="round"/>
<path d="M243.25 280.2h2.4v1.600h-2.400zM269.65 280.2h2.4v1.600h-2.400zM243.25 302.9h2.4v1.600h-2.400zM269.65 302.9h2.4v1.600h-2.400zM296.6 263.8h2.4v1.600h-2.400zM323 263.8h2.4v1.600h-2.400zM296.6 286.4h2.4v1.600h-2.400zM323 286.4h2.4v1.600h-2.400zM349.95 280.2h2.4v1.600h-2.400zM376.35 280.2h2.4v1.600h-2.400zM349.95 302.9h2.4v1.600h-2.400zM376.35 302.9h2.4v1.600h-2.400zM403.3 263.8h2.4v1.600h-2.400zM429.7 263.8h2.4v1.600h-2.400zM403.3 286.4h2.4v1.600h-2.400zM429.7 286.4h2.4v1.600h-2.400zM456.65 280.2h2.4v1.600h-2.400zM483.05 280.2h2.4v1.600h-2.400zM456.65 302.9h2.4v1.600h-2.400zM483.05 302.9h2.4v1.600h-2.400zM510 263.8h2.4v1.600h-2.400zM536.4 263.8h2.4v1.600h-2.400zM510 286.4h2.4v1.600h-2.400zM536.4 286.4h2.4v1.600h-2.400zM563.35 280.2h2.4v1.600h-2.400zM589.75 280.2h2.4v1.600h-2.400zM563.35 302.9h2.4v1.600h-2.400zM589.75 302.9h2.4v1.600h-2.400zM616.7 263.8h2.4v1.600h-2.400zM643.1 263.8h2.4v1.600h-2.400zM616.7 286.4h2.4v1.600h-2.400zM643.1 286.4h2.4v1.600h-2.400zM670.05 280.2h2.4v1.600h-2.400zM696.45 280.2h2.4v1.600h-2.400zM670.05 302.9h2.4v1.600h-2.400zM696.45 302.9h2.4v1.600h-2.400zM723.4 263.8h2.4v1.600h-2.400zM749.8 263.8h2.4v1.600h-2.400zM723.4 286.4h2.4v1.600h-2.400zM749.8 286.4h2.4v1.600h-2.400zM776.75 280.2h2.4v1.600h-2.400zM803.15 280.2h2.4v1.600h-2.400zM776.75 302.9h2.4v1.600h-2.400zM803.15 302.9h2.4v1.600h-2.400zM830.1 263.8h2.4v1.600h-2.400zM856.5 263.8h2.4v1.600h-2.400zM830.1 286.4h2.4v1.600h-2.400zM856.5 286.4h2.4v1.600h-2.400zM243.25 332.47h2.4v1.600h-2.400zM269.65 332.47h2.4v1.600h-2.400zM243.25 355.17h2.4v1.600h-2.400zM269.65 355.17h2.4v1.600h-2.400zM296.6 316.07h2.4v1.600h-2.400zM323 316.07h2.4v1.600h-2.400zM296.6 338.67h2.4v1.600h-2.400zM323 338.67h2.4v1.600h-2.400zM349.95 332.47h2.4v1.600h-2.400zM376.35 332.47h2.4v1.600h-2.400zM349.95 355.17h2.4v1.600h-2.400zM376.35 355.17h2.4v1.600h-2.400zM403.3 316.07h2.4v1.600h-2.400zM429.7 316.07h2.4v1.600h-2.400zM403.3 338.67h2.4v1.600h-2.400zM429.7 338.67h2.4v1.600h-2.400zM456.65 332.47h2.4v1.600h-2.400zM483.05 332.47h2.4v1.600h-2.400zM456.65 355.17h2.4v1.600h-2.400zM483.05 355.17h2.4v1.600h-2.400zM510 316.07h2.4v1.600h-2.400zM536.4 316.07h2.4v1.600h-2.400zM510 338.67h2.4v1.600h-2.400zM536.4 338.67h2.4v1.600h-2.400zM563.35 332.47h2.4v1.600h-2.400zM589.75 332.47h2.4v1.600h-2.400zM563.35 355.17h2.4v1.600h-2.400zM589.75 355.17h2.4v1.600h-2.400zM616.7 316.07h2.4v1.600h-2.400zM643.1 316.07h2.4v1.600h-2.400zM616.7 338.67h2.4v1.600h-2.400zM643.1 338.67h2.4v1.600h-2.400zM670.05 332.47h2.4v1.600h-2.400zM696.45 332.47h2.4v1.600h-2.400zM670.05 355.17h2.4v1.600h-2.400zM696.45 355.17h2.4v1.600h-2.400zM723.4 316.07h2.4v1.600h-2.400zM749.8 316.07h2.4v1.600h-2.400zM723.4 338.67h2.4v1.600h-2.400zM749.8 338.67h2.4v1.600h-2.400zM776.75 332.47h2.4v1.600h-2.400zM803.15 332.47h2.4v1.600h-2.400zM776.75 355.17h2.4v1.600h-2.400zM803.15 355.17h2.4v1.600h-2.400zM830.1 316.07h2.4v1.600h-2.400zM856.5 316.07h2.4v1.600h-2.400zM830.1 338.67h2.4v1.600h-2.400zM856.5 338.67h2.4v1.600h-2.400zM243.25 384.74h2.4v1.600h-2.400zM269.65 384.74h2.4v1.600h-2.400zM243.25 407.44h2.4v1.600h-2.400zM269.65 407.44h2.4v1.600h-2.400zM296.6 368.34h2.4v1.600h-2.400zM323 368.34h2.4v1.600h-2.400zM296.6 390.94h2.4v1.600h-2.400zM323 390.94h2.4v1.600h-2.400zM349.95 384.74h2.4v1.600h-2.400zM376.35 384.74h2.4v1.600h-2.400zM349.95 407.44h2.4v1.600h-2.400zM376.35 407.44h2.4v1.600h-2.400zM403.3 368.34h2.4v1.600h-2.400zM429.7 368.34h2.4v1.600h-2.400zM403.3 390.94h2.4v1.600h-2.400zM429.7 390.94h2.4v1.600h-2.400zM456.65 384.74h2.4v1.600h-2.400zM483.05 384.74h2.4v1.600h-2.400zM456.65 407.44h2.4v1.600h-2.400zM483.05 407.44h2.4v1.600h-2.400zM510 368.34h2.4v1.600h-2.400zM536.4 368.34h2.4v1.600h-2.400zM510 390.94h2.4v1.600h-2.400zM536.4 390.94h2.4v1.600h-2.400zM563.35 384.74h2.4v1.600h-2.400zM589.75 384.74h2.4v1.600h-2.400zM563.35 407.44h2.4v1.600h-2.400zM589.75 407.44h2.4v1.600h-2.400zM616.7 368.34h2.4v1.600h-2.400zM643.1 368.34h2.4v1.600h-2.400zM616.7 390.94h2.4v1.600h-2.400zM643.1 390.94h2.4v1.600h-2.400zM670.05 384.74h2.4v1.600h-2.400zM696.45 384.74h2.4v1.600h-2.400zM670.05 407.44h2.4v1.600h-2.400zM696.45 407.44h2.4v1.600h-2.400zM723.4 368.34h2.4v1.600h-2.400zM749.8 368.34h2.4v1.600h-2.400zM723.4 390.94h2.4v1.600h-2.400zM749.8 390.94h2.4v1.600h-2.400zM776.75 384.74h2.4v1.600h-2.400zM803.15 384.74h2.4v1.600h-2.400zM776.75 407.44h2.4v1.600h-2.400zM803.15 407.44h2.4v1.600h-2.400zM830.1 368.34h2.4v1.600h-2.400zM856.5 368.34h2.4v1.600h-2.400zM830.1 390.94h2.4v1.600h-2.400zM856.5 390.94h2.4v1.600h-2.400zM243.25 437.01h2.4v1.600h-2.400zM269.65 437.01h2.4v1.600h-2.400zM243.25 459.71h2.4v1.600h-2.400zM269.65 459.71h2.4v1.600h-2.400zM296.6 420.61h2.4v1.600h-2.400zM323 420.61h2.4v1.600h-2.400zM296.6 443.21h2.4v1.600h-2.400zM323 443.21h2.4v1.600h-2.400zM349.95 437.01h2.4v1.600h-2.400zM376.35 437.01h2.4v1.600h-2.400zM349.95 459.71h2.4v1.600h-2.400zM376.35 459.71h2.4v1.600h-2.400zM403.3 420.61h2.4v1.600h-2.400zM429.7 420.61h2.4v1.600h-2.400zM403.3 443.21h2.4v1.600h-2.400zM429.7 443.21h2.4v1.600h-2.400zM456.65 437.01h2.4v1.600h-2.400zM483.05 437.01h2.4v1.600h-2.400zM456.65 459.71h2.4v1.600h-2.400zM483.05 459.71h2.4v1.600h-2.400zM510 420.61h2.4v1.600h-2.400zM536.4 420.61h2.4v1.600h-2.400zM510 443.21h2.4v1.600h-2.400zM536.4 443.21h2.4v1.600h-2.400zM563.35 437.01h2.4v1.600h-2.400zM589.75 437.01h2.4v1.600h-2.400zM563.35 459.71h2.4v1.600h-2.400zM589.75 459.71h2.4v1.600h-2.400zM616.7 420.61h2.4v1.600h-2.400zM643.1 420.61h2.4v1.600h-2.400zM616.7 443.21h2.4v1.600h-2.400zM643.1 443.21h2.4v1.600h-2.400zM670.05 437.01h2.4v1.600h-2.400zM696.45 437.01h2.4v1.600h-2.400zM670.05 459.71h2.4v1.600h-2.400zM696.45 459.71h2.4v1.600h-2.400zM723.4 420.61h2.4v1.600h-2.400zM749.8 420.61h2.4v1.600h-2.400zM723.4 443.21h2.4v1.600h-2.400zM749.8 443.21h2.4v1.600h-2.400zM776.75 437.01h2.4v1.600h-2.400zM803.15 437.01h2.4v1.600h-2.400zM776.75 459.71h2.4v1.600h-2.400zM803.15 459.71h2.4v1.600h-2.400zM830.1 420.61h2.4v1.600h-2.400zM856.5 420.61h2.4v1.600h-2.400zM830.1 443.21h2.4v1.600h-2.400zM856.5 443.21h2.4v1.600h-2.400zM243.25 489.28h2.4v1.600h-2.400zM269.65 489.28h2.4v1.600h-2.400zM243.25 511.98h2.4v1.600h-2.400zM269.65 511.98h2.4v1.600h-2.400zM296.6 472.88h2.4v1.600h-2.400zM323 472.88h2.4v1.600h-2.400zM296.6 495.48h2.4v1.600h-2.400zM323 495.48h2.4v1.600h-2.400zM349.95 489.28h2.4v1.600h-2.400zM376.35 489.28h2.4v1.600h-2.400zM349.95 511.98h2.4v1.600h-2.400zM376.35 511.98h2.4v1.600h-2.400zM403.3 472.88h2.4v1.600h-2.400zM429.7 472.88h2.4v1.600h-2.400zM403.3 495.48h2.4v1.600h-2.400zM429.7 495.48h2.4v1.600h-2.400zM456.65 489.28h2.4v1.600h-2.400zM483.05 489.28h2.4v1.600h-2.400zM456.65 511.98h2.4v1.600h-2.400zM483.05 511.98h2.4v1.600h-2.400zM510 472.88h2.4v1.600h-2.400zM536.4 472.88h2.4v1.600h-2.400zM510 495.48h2.4v1.600h-2.400zM536.4 495.48h2.4v1.600h-2.400zM563.35 489.28h2.4v1.600h-2.400zM589.75 489.28h2.4v1.600h-2.400zM563.35 511.98h2.4v1.600h-2.400zM589.75 511.98h2.4v1.600h-2.400zM616.7 472.88h2.4v1.600h-2.400zM643.1 472.88h2.4v1.600h-2.400zM616.7 495.48h2.4v1.600h-2.400zM643.1 495.48h2.4v1.600h-2.400zM670.05 489.28h2.4v1.600h-2.400zM696.45 489.28h2.4v1.600h-2.400zM670.05 511.98h2.4v1.600h-2.400zM696.45 511.98h2.4v1.600h-2.400zM723.4 472.88h2.4v1.600h-2.400zM749.8 472.88h2.4v1.600h-2.400zM723.4 495.48h2.4v1.600h-2.400zM749.8 495.48h2.4v1.600h-2.400zM776.75 489.28h2.4v1.600h-2.400zM803.15 489.28h2.4v1.600h-2.400zM776.75 511.98h2.4v1.600h-2.400zM803.15 511.98h2.4v1.600h-2.400zM830.1 472.88h2.4v1.600h-2.400zM856.5 472.88h2.4v1.600h-2.400zM830.1 495.48h2.4v1.600h-2.400zM856.5 495.48h2.4v1.600h-2.400z" fill="#053016"/>
<path d="M244.45 261.6l2.4 -2.2l.2 2.4M267.05 262.2l2.6 -2.4l-2.6 -0.2M297.8 306.07l2.4 2.2l.2 -2.4M320.4 305.47l2.6 2.4l-2.6 0.2M351.15 261.6l2.4 -2.2l.2 2.4M373.75 262.2l2.6 -2.4l-2.6 -0.2M404.5 306.07l2.4 2.2l.2 -2.4M427.1 305.47l2.6 2.4l-2.6 0.2M457.85 261.6l2.4 -2.2l.2 2.4M480.45 262.2l2.6 -2.4l-2.6 -0.2M511.2 306.07l2.4 2.2l.2 -2.4M533.8 305.47l2.6 2.4l-2.6 0.2M564.55 261.6l2.4 -2.2l.2 2.4M587.15 262.2l2.6 -2.4l-2.6 -0.2M617.9 306.07l2.4 2.2l.2 -2.4M640.5 305.47l2.6 2.4l-2.6 0.2M671.25 261.6l2.4 -2.2l.2 2.4M693.85 262.2l2.6 -2.4l-2.6 -0.2M724.6 306.07l2.4 2.2l.2 -2.4M747.2 305.47l2.6 2.4l-2.6 0.2M777.95 261.6l2.4 -2.2l.2 2.4M800.55 262.2l2.6 -2.4l-2.6 -0.2M831.3 306.07l2.4 2.2l.2 -2.4M853.9 305.47l2.6 2.4l-2.6 0.2M244.45 313.87l2.4 -2.2l.2 2.4M267.05 314.47l2.6 -2.4l-2.6 -0.2M297.8 358.34l2.4 2.2l.2 -2.4M320.4 357.74l2.6 2.4l-2.6 0.2M351.15 313.87l2.4 -2.2l.2 2.4M373.75 314.47l2.6 -2.4l-2.6 -0.2M404.5 358.34l2.4 2.2l.2 -2.4M427.1 357.74l2.6 2.4l-2.6 0.2M457.85 313.87l2.4 -2.2l.2 2.4M480.45 314.47l2.6 -2.4l-2.6 -0.2M511.2 358.34l2.4 2.2l.2 -2.4M533.8 357.74l2.6 2.4l-2.6 0.2M564.55 313.87l2.4 -2.2l.2 2.4M587.15 314.47l2.6 -2.4l-2.6 -0.2M617.9 358.34l2.4 2.2l.2 -2.4M640.5 357.74l2.6 2.4l-2.6 0.2M671.25 313.87l2.4 -2.2l.2 2.4M693.85 314.47l2.6 -2.4l-2.6 -0.2M724.6 358.34l2.4 2.2l.2 -2.4M747.2 357.74l2.6 2.4l-2.6 0.2M777.95 313.87l2.4 -2.2l.2 2.4M800.55 314.47l2.6 -2.4l-2.6 -0.2M831.3 358.34l2.4 2.2l.2 -2.4M853.9 357.74l2.6 2.4l-2.6 0.2M244.45 366.14l2.4 -2.2l.2 2.4M267.05 366.74l2.6 -2.4l-2.6 -0.2M297.8 410.61l2.4 2.2l.2 -2.4M320.4 410.01l2.6 2.4l-2.6 0.2M351.15 366.14l2.4 -2.2l.2 2.4M373.75 366.74l2.6 -2.4l-2.6 -0.2M404.5 410.61l2.4 2.2l.2 -2.4M427.1 410.01l2.6 2.4l-2.6 0.2M457.85 366.14l2.4 -2.2l.2 2.4M480.45 366.74l2.6 -2.4l-2.6 -0.2M511.2 410.61l2.4 2.2l.2 -2.4M533.8 410.01l2.6 2.4l-2.6 0.2M564.55 366.14l2.4 -2.2l.2 2.4M587.15 366.74l2.6 -2.4l-2.6 -0.2M617.9 410.61l2.4 2.2l.2 -2.4M640.5 410.01l2.6 2.4l-2.6 0.2M671.25 366.14l2.4 -2.2l.2 2.4M693.85 366.74l2.6 -2.4l-2.6 -0.2M724.6 410.61l2.4 2.2l.2 -2.4M747.2 410.01l2.6 2.4l-2.6 0.2M777.95 366.14l2.4 -2.2l.2 2.4M800.55 366.74l2.6 -2.4l-2.6 -0.2M831.3 410.61l2.4 2.2l.2 -2.4M853.9 410.01l2.6 2.4l-2.6 0.2M244.45 418.41l2.4 -2.2l.2 2.4M267.05 419.01l2.6 -2.4l-2.6 -0.2M297.8 462.88l2.4 2.2l.2 -2.4M320.4 462.28l2.6 2.4l-2.6 0.2M351.15 418.41l2.4 -2.2l.2 2.4M373.75 419.01l2.6 -2.4l-2.6 -0.2M404.5 462.88l2.4 2.2l.2 -2.4M427.1 462.28l2.6 2.4l-2.6 0.2M457.85 418.41l2.4 -2.2l.2 2.4M480.45 419.01l2.6 -2.4l-2.6 -0.2M511.2 462.88l2.4 2.2l.2 -2.4M533.8 462.28l2.6 2.4l-2.6 0.2M564.55 418.41l2.4 -2.2l.2 2.4M587.15 419.01l2.6 -2.4l-2.6 -0.2M617.9 462.88l2.4 2.2l.2 -2.4M640.5 462.28l2.6 2.4l-2.6 0.2M671.25 418.41l2.4 -2.2l.2 2.4M693.85 419.01l2.6 -2.4l-2.6 -0.2M724.6 462.88l2.4 2.2l.2 -2.4M747.2 462.28l2.6 2.4l-2.6 0.2M777.95 418.41l2.4 -2.2l.2 2.4M800.55 419.01l2.6 -2.4l-2.6 -0.2M831.3 462.88l2.4 2.2l.2 -2.4M853.9 462.28l2.6 2.4l-2.6 0.2M244.45 470.68l2.4 -2.2l.2 2.4M267.05 471.28l2.6 -2.4l-2.6 -0.2M297.8 515.15l2.4 2.2l.2 -2.4M320.4 514.55l2.6 2.4l-2.6 0.2M351.15 470.68l2.4 -2.2l.2 2.4M373.75 471.28l2.6 -2.4l-2.6 -0.2M404.5 515.15l2.4 2.2l.2 -2.4M427.1 514.55l2.6 2.4l-2.6 0.2M457.85 470.68l2.4 -2.2l.2 2.4M480.45 471.28l2.6 -2.4l-2.6 -0.2M511.2 515.15l2.4 2.2l.2 -2.4M533.8 514.55l2.6 2.4l-2.6 0.2M564.55 470.68l2.4 -2.2l.2 2.4M587.15 471.28l2.6 -2.4l-2.6 -0.2M617.9 515.15l2.4 2.2l.2 -2.4M640.5 514.55l2.6 2.4l-2.6 0.2M671.25 470.68l2.4 -2.2l.2 2.4M693.85 471.28l2.6 -2.4l-2.6 -0.2M724.6 515.15l2.4 2.2l.2 -2.4M747.2 514.55l2.6 2.4l-2.6 0.2M777.95 470.68l2.4 -2.2l.2 2.4M800.55 471.28l2.6 -2.4l-2.6 -0.2M831.3 515.15l2.4 2.2l.2 -2.4M853.9 514.55l2.6 2.4l-2.6 0.2" stroke="#17f017" stroke-width=".7"/>
<path d="M226.9 297h3.7v9.400h-3.700zM869.3 259.8h3.6v12h-3.600zM226.9 349.34h3.7v11.8h-3.700zM869.3 312.07h3.6v12h-3.600zM226.9 401.61h3.7v11.8h-3.700zM869.3 364.34h3.6v12h-3.600zM226.9 453.88h3.7v11.8h-3.700zM869.3 416.61h3.6v12h-3.600zM226.9 506.15h3.7v11.8h-3.700zM869.3 468.88h3.6v12h-3.600z" fill="#d46246" stroke="#17f017" stroke-width=".8"/>
<rect x="228" y="307.2" width="4.8" height="4.6" fill="#fff200"/>
<path d="M225.3 175V566M285.3 175V566M345.3 175V566M405.3 175V566M465.3 175V566M525.3 175V566M585.3 175V566M645.3 175V566M705.3 175V566M765.3 175V566M825.3 175V566M885.3 175V566M214 519.4H887M214 459.4H887M214 399.4H887M214 339.4H887M214 279.4H887M214 219.4H887" stroke="#d8d8d8" stroke-opacity=".3" stroke-width=".8" stroke-dasharray="1 1.200"/>
<rect x="225.3" y="219.4" width="660.0" height="300.0" stroke="#fff" stroke-width="1.1"/>
<path d="M216 519.4H225.3" stroke="#e8e8e8" stroke-width=".8"/>
<g fill="#fff"><circle cx="288.2" cy="257.9" r="1.55"/><circle cx="394.9" cy="257.9" r="1.55"/><circle cx="501.6" cy="257.9" r="1.55"/><circle cx="608.3" cy="257.9" r="1.55"/><circle cx="715" cy="257.9" r="1.55"/><circle cx="821.7" cy="257.9" r="1.55"/><circle cx="288.2" cy="310.17" r="1.55"/><circle cx="280" cy="310.17" r="1.55"/><circle cx="394.9" cy="310.17" r="1.55"/><circle cx="386.7" cy="310.17" r="1.55"/><circle cx="501.6" cy="310.17" r="1.55"/><circle cx="493.4" cy="310.17" r="1.55"/><circle cx="608.3" cy="310.17" r="1.55"/><circle cx="600.1" cy="310.17" r="1.55"/><circle cx="715" cy="310.17" r="1.55"/><circle cx="706.8" cy="310.17" r="1.55"/><circle cx="821.7" cy="310.17" r="1.55"/><circle cx="813.5" cy="310.17" r="1.55"/><circle cx="288.2" cy="362.44" r="1.55"/><circle cx="280" cy="362.44" r="1.55"/><circle cx="394.9" cy="362.44" r="1.55"/><circle cx="386.7" cy="362.44" r="1.55"/><circle cx="501.6" cy="362.44" r="1.55"/><circle cx="493.4" cy="362.44" r="1.55"/><circle cx="608.3" cy="362.44" r="1.55"/><circle cx="600.1" cy="362.44" r="1.55"/><circle cx="715" cy="362.44" r="1.55"/><circle cx="706.8" cy="362.44" r="1.55"/><circle cx="821.7" cy="362.44" r="1.55"/><circle cx="813.5" cy="362.44" r="1.55"/><circle cx="288.2" cy="414.71" r="1.55"/><circle cx="280" cy="414.71" r="1.55"/><circle cx="394.9" cy="414.71" r="1.55"/><circle cx="386.7" cy="414.71" r="1.55"/><circle cx="501.6" cy="414.71" r="1.55"/><circle cx="493.4" cy="414.71" r="1.55"/><circle cx="608.3" cy="414.71" r="1.55"/><circle cx="600.1" cy="414.71" r="1.55"/><circle cx="715" cy="414.71" r="1.55"/><circle cx="706.8" cy="414.71" r="1.55"/><circle cx="821.7" cy="414.71" r="1.55"/><circle cx="813.5" cy="414.71" r="1.55"/><circle cx="288.2" cy="466.98" r="1.55"/><circle cx="280" cy="466.98" r="1.55"/><circle cx="394.9" cy="466.98" r="1.55"/><circle cx="386.7" cy="466.98" r="1.55"/><circle cx="501.6" cy="466.98" r="1.55"/><circle cx="493.4" cy="466.98" r="1.55"/><circle cx="608.3" cy="466.98" r="1.55"/><circle cx="600.1" cy="466.98" r="1.55"/><circle cx="715" cy="466.98" r="1.55"/><circle cx="706.8" cy="466.98" r="1.55"/><circle cx="821.7" cy="466.98" r="1.55"/><circle cx="813.5" cy="466.98" r="1.55"/><circle cx="280" cy="519.25" r="1.55"/><circle cx="386.7" cy="519.25" r="1.55"/><circle cx="493.4" cy="519.25" r="1.55"/><circle cx="600.1" cy="519.25" r="1.55"/><circle cx="706.8" cy="519.25" r="1.55"/><circle cx="813.5" cy="519.25" r="1.55"/><circle cx="295.1" cy="228.6" r="1.55"/><circle cx="295.1" cy="243.6" r="1.55"/><circle cx="297.7" cy="241.8" r="1.55"/><circle cx="297.7" cy="256.8" r="1.55"/><circle cx="365.16" cy="228.6" r="1.55"/><circle cx="365.16" cy="243.6" r="1.55"/><circle cx="367.76" cy="241.8" r="1.55"/><circle cx="367.76" cy="256.8" r="1.55"/><circle cx="435.22" cy="228.6" r="1.55"/><circle cx="435.22" cy="243.6" r="1.55"/><circle cx="437.82" cy="241.8" r="1.55"/><circle cx="437.82" cy="256.8" r="1.55"/><circle cx="505.28" cy="228.6" r="1.55"/><circle cx="505.28" cy="243.6" r="1.55"/><circle cx="507.88" cy="241.8" r="1.55"/><circle cx="507.88" cy="256.8" r="1.55"/><circle cx="575.34" cy="228.6" r="1.55"/><circle cx="575.34" cy="243.6" r="1.55"/><circle cx="577.94" cy="241.8" r="1.55"/><circle cx="577.94" cy="256.8" r="1.55"/><circle cx="645.4" cy="228.6" r="1.55"/><circle cx="645.4" cy="243.6" r="1.55"/><circle cx="648" cy="241.8" r="1.55"/><circle cx="648" cy="256.8" r="1.55"/><circle cx="715.46" cy="228.6" r="1.55"/><circle cx="715.46" cy="243.6" r="1.55"/><circle cx="718.06" cy="241.8" r="1.55"/><circle cx="718.06" cy="256.8" r="1.55"/><circle cx="785.52" cy="228.6" r="1.55"/><circle cx="785.52" cy="243.6" r="1.55"/><circle cx="788.12" cy="241.8" r="1.55"/><circle cx="788.12" cy="256.8" r="1.55"/><circle cx="855.58" cy="228.6" r="1.55"/><circle cx="855.58" cy="243.6" r="1.55"/><circle cx="226.8" cy="241.8" r="1.55"/><circle cx="226.8" cy="257" r="1.55"/></g>
<circle cx="225.3" cy="519.4" r="1.1" fill="#f01818"/>
<path d="M228.4 520.4V549.8M231.2 552.4H261.8" stroke="#cfcfcf" stroke-width=".7"/>
<rect x="225.9" y="549.9" width="5.2" height="5.2" stroke="#cfcfcf" stroke-width=".8"/>
</g></svg>
<div style="position:absolute;left:225.4px;transform:translateX(-50%);top:521.52px;height:6.16px;line-height:6.16px;font-size:4.4px;color:#d0d0d0;white-space:nowrap;">Y</div>
<div style="position:absolute;left:258.6px;transform:translateX(-50%);top:552.86px;height:10.08px;line-height:10.08px;font-size:7.2px;color:#d0d0d0;white-space:nowrap;">X</div>
<div style="position:absolute;left:218.4px;top:180.97px;height:11.82px;line-height:11.82px;font-size:8.44px;color:#f2f2f2;white-space:nowrap;font-family:'Liberation Sans','Noto Serif CJK SC',serif;font-weight:700;letter-spacing:0.47px;">底图-&gt;排样底图</div>
<div class="cap2" style="position:absolute;left:738.8px;top:178.77px;height:11.82px;line-height:11.82px;font-size:8.44px;color:#f6f600;white-space:nowrap;font-family:'Liberation Sans','Noto Serif CJK SC',serif;font-weight:700;letter-spacing:0.2px;">板材:热轧板&nbsp;&nbsp;厚度:1mm&nbsp;&nbsp;气体:空气</div>
<div style="position:absolute;left:0px;top:566.6px;width:900px;height:11.7px;background:#0b1d64;"></div>
<div style="position:absolute;left:192px;top:565.8px;width:708px;height:0.8px;background:#8c8c8c;"></div>
<div style="position:absolute;left:1px;top:568.61px;height:7.98px;line-height:7.98px;font-size:5.7px;color:#fff;white-space:nowrap;font-family:'Liberation Mono','Noto Sans CJK SC',monospace;letter-spacing:-0.62px;">[3001.91,2940.612]</div>
<div style="position:absolute;left:59px;top:569.41px;height:7.98px;line-height:7.98px;font-size:5.7px;color:#fff;white-space:nowrap;font-family:'Liberation Mono','Noto Sans CJK SC',monospace;letter-spacing:-0.62px;"><span style="letter-spacing:0.1px">零件</span>,<span style="letter-spacing:0.1px">数量</span>:2,<span style="letter-spacing:0.1px">名称</span>:01,ID:2022-05-17-20-29-51-633-2,<span style="letter-spacing:0.1px">尺寸</span>:40.786 x 105</div>
</div></body></html>
